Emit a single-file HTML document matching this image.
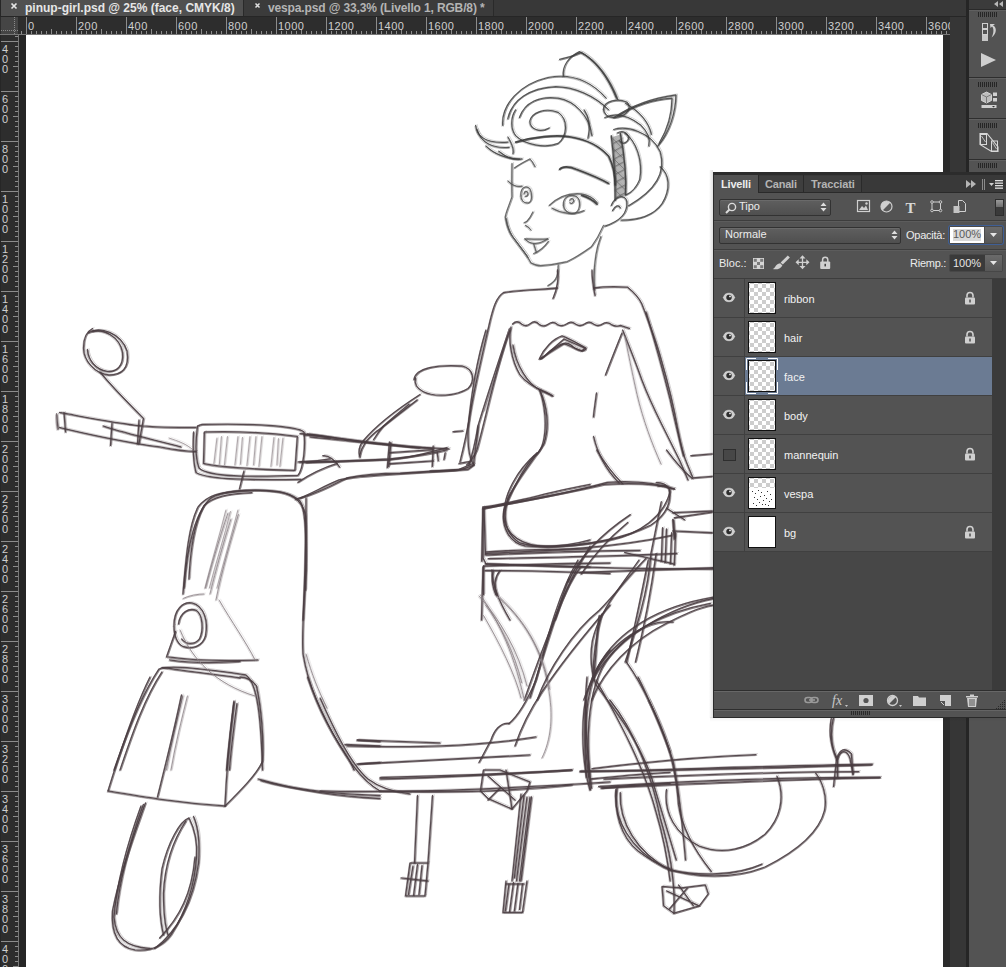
<!DOCTYPE html>
<html><head><meta charset="utf-8">
<style>
html,body{margin:0;padding:0;width:1006px;height:967px;overflow:hidden;background:#2b2b2b;font-family:"Liberation Sans",sans-serif;}
.abs{position:absolute}
</style></head><body>
<div class="abs" style="left:0;top:0;width:969px;height:17px;background:#383838"></div>
<div class="abs" style="left:0;top:0;width:1px;height:17px;background:#262626"></div>
<div class="abs" style="left:1px;top:0;width:242px;height:16px;background:#505050"></div>
<div class="abs" style="left:243px;top:0;width:1px;height:16px;background:#2a2a2a"></div>
<div class="abs" style="left:244px;top:0;width:249px;height:16px;background:#3b3b3b"></div>
<div class="abs" style="left:493px;top:0;width:1px;height:16px;background:#2a2a2a"></div>
<div class="abs" style="left:0;top:16px;width:969px;height:1px;background:#262626"></div>
<svg class="abs" style="left:10px;top:2px" width="9" height="9"><path d="M1.5 1.5 L6.5 6.5 M6.5 1.5 L1.5 6.5" stroke="#e6e6e6" stroke-width="1.7"/></svg>
<div class="abs" style="left:25px;top:1px;font-size:12px;line-height:15px;color:#e6e6e6;font-weight:bold">pinup-girl.psd @ 25% (face, CMYK/8)</div>
<svg class="abs" style="left:254px;top:2px" width="9" height="9"><path d="M1.5 1.5 L5.5 5.5 M5.5 1.5 L1.5 5.5" stroke="#e0e0e0" stroke-width="1.5"/></svg>
<div class="abs" style="left:268px;top:1px;font-size:12px;line-height:15px;color:#b4b4b4;font-weight:bold;letter-spacing:-0.14px">vespa.psd @ 33,3% (Livello 1, RGB/8) *</div>
<svg width="950" height="18" style="position:absolute;left:0;top:17px"><rect x="0" y="0" width="950" height="18" fill="#2d2d2d"/><rect x="1" y="0" width="17" height="17" fill="#454545"/><line x1="14.5" y1="0" x2="14.5" y2="17" stroke="#8a8a8a" stroke-width="1" stroke-dasharray="1,1"/><line x1="1" y1="13.5" x2="18" y2="13.5" stroke="#8a8a8a" stroke-width="1" stroke-dasharray="1,1"/><path d="M21.5 14V17M26.5 0V17M31.5 14V17M36.5 14V17M41.5 14V17M46.5 14V17M51.5 12V17M56.5 14V17M61.5 14V17M66.5 14V17M71.5 14V17M76.5 0V17M81.5 14V17M86.5 14V17M91.5 14V17M96.5 14V17M101.5 12V17M106.5 14V17M111.5 14V17M116.5 14V17M121.5 14V17M126.5 0V17M131.5 14V17M136.5 14V17M141.5 14V17M146.5 14V17M151.5 12V17M156.5 14V17M161.5 14V17M166.5 14V17M171.5 14V17M176.5 0V17M181.5 14V17M186.5 14V17M191.5 14V17M196.5 14V17M201.5 12V17M206.5 14V17M211.5 14V17M216.5 14V17M221.5 14V17M226.5 0V17M231.5 14V17M236.5 14V17M241.5 14V17M246.5 14V17M251.5 12V17M256.5 14V17M261.5 14V17M266.5 14V17M271.5 14V17M276.5 0V17M281.5 14V17M286.5 14V17M291.5 14V17M296.5 14V17M301.5 12V17M306.5 14V17M311.5 14V17M316.5 14V17M321.5 14V17M326.5 0V17M331.5 14V17M336.5 14V17M341.5 14V17M346.5 14V17M351.5 12V17M356.5 14V17M361.5 14V17M366.5 14V17M371.5 14V17M376.5 0V17M381.5 14V17M386.5 14V17M391.5 14V17M396.5 14V17M401.5 12V17M406.5 14V17M411.5 14V17M416.5 14V17M421.5 14V17M426.5 0V17M431.5 14V17M436.5 14V17M441.5 14V17M446.5 14V17M451.5 12V17M456.5 14V17M461.5 14V17M466.5 14V17M471.5 14V17M476.5 0V17M481.5 14V17M486.5 14V17M491.5 14V17M496.5 14V17M501.5 12V17M506.5 14V17M511.5 14V17M516.5 14V17M521.5 14V17M526.5 0V17M531.5 14V17M536.5 14V17M541.5 14V17M546.5 14V17M551.5 12V17M556.5 14V17M561.5 14V17M566.5 14V17M571.5 14V17M576.5 0V17M581.5 14V17M586.5 14V17M591.5 14V17M596.5 14V17M601.5 12V17M606.5 14V17M611.5 14V17M616.5 14V17M621.5 14V17M626.5 0V17M631.5 14V17M636.5 14V17M641.5 14V17M646.5 14V17M651.5 12V17M656.5 14V17M661.5 14V17M666.5 14V17M671.5 14V17M676.5 0V17M681.5 14V17M686.5 14V17M691.5 14V17M696.5 14V17M701.5 12V17M706.5 14V17M711.5 14V17M716.5 14V17M721.5 14V17M726.5 0V17M731.5 14V17M736.5 14V17M741.5 14V17M746.5 14V17M751.5 12V17M756.5 14V17M761.5 14V17M766.5 14V17M771.5 14V17M776.5 0V17M781.5 14V17M786.5 14V17M791.5 14V17M796.5 14V17M801.5 12V17M806.5 14V17M811.5 14V17M816.5 14V17M821.5 14V17M826.5 0V17M831.5 14V17M836.5 14V17M841.5 14V17M846.5 14V17M851.5 12V17M856.5 14V17M861.5 14V17M866.5 14V17M871.5 14V17M876.5 0V17M881.5 14V17M886.5 14V17M891.5 14V17M896.5 14V17M901.5 12V17M906.5 14V17M911.5 14V17M916.5 14V17M921.5 14V17M926.5 0V17M931.5 14V17M936.5 14V17M941.5 14V17M946.5 14V17" stroke="#8c8c8c" stroke-width="1" fill="none"/><text x="28" y="13" font-size="11" letter-spacing="0.45" fill="#cfcfcf" font-family="Liberation Sans, sans-serif">0</text><text x="78" y="13" font-size="11" letter-spacing="0.45" fill="#cfcfcf" font-family="Liberation Sans, sans-serif">200</text><text x="128" y="13" font-size="11" letter-spacing="0.45" fill="#cfcfcf" font-family="Liberation Sans, sans-serif">400</text><text x="178" y="13" font-size="11" letter-spacing="0.45" fill="#cfcfcf" font-family="Liberation Sans, sans-serif">600</text><text x="228" y="13" font-size="11" letter-spacing="0.45" fill="#cfcfcf" font-family="Liberation Sans, sans-serif">800</text><text x="278" y="13" font-size="11" letter-spacing="0.45" fill="#cfcfcf" font-family="Liberation Sans, sans-serif">1000</text><text x="328" y="13" font-size="11" letter-spacing="0.45" fill="#cfcfcf" font-family="Liberation Sans, sans-serif">1200</text><text x="378" y="13" font-size="11" letter-spacing="0.45" fill="#cfcfcf" font-family="Liberation Sans, sans-serif">1400</text><text x="428" y="13" font-size="11" letter-spacing="0.45" fill="#cfcfcf" font-family="Liberation Sans, sans-serif">1600</text><text x="478" y="13" font-size="11" letter-spacing="0.45" fill="#cfcfcf" font-family="Liberation Sans, sans-serif">1800</text><text x="528" y="13" font-size="11" letter-spacing="0.45" fill="#cfcfcf" font-family="Liberation Sans, sans-serif">2000</text><text x="578" y="13" font-size="11" letter-spacing="0.45" fill="#cfcfcf" font-family="Liberation Sans, sans-serif">2200</text><text x="628" y="13" font-size="11" letter-spacing="0.45" fill="#cfcfcf" font-family="Liberation Sans, sans-serif">2400</text><text x="678" y="13" font-size="11" letter-spacing="0.45" fill="#cfcfcf" font-family="Liberation Sans, sans-serif">2600</text><text x="728" y="13" font-size="11" letter-spacing="0.45" fill="#cfcfcf" font-family="Liberation Sans, sans-serif">2800</text><text x="778" y="13" font-size="11" letter-spacing="0.45" fill="#cfcfcf" font-family="Liberation Sans, sans-serif">3000</text><text x="828" y="13" font-size="11" letter-spacing="0.45" fill="#cfcfcf" font-family="Liberation Sans, sans-serif">3200</text><text x="878" y="13" font-size="11" letter-spacing="0.45" fill="#cfcfcf" font-family="Liberation Sans, sans-serif">3400</text><text x="928" y="13" font-size="11" letter-spacing="0.45" fill="#cfcfcf" font-family="Liberation Sans, sans-serif">3600</text><rect x="0" y="17" width="950" height="1" fill="#777"/></svg>
<svg width="26" height="932" style="position:absolute;left:0;top:35px"><rect x="0" y="0" width="26" height="932" fill="#262626"/><rect x="1" y="0" width="17" height="932" fill="#2d2d2d"/><rect x="18" y="0" width="1" height="932" fill="#777"/><path d="M15 1.5H18M1 6.5H18M15 11.5H18M15 16.5H18M15 21.5H18M15 26.5H18M13 31.5H18M15 36.5H18M15 41.5H18M15 46.5H18M15 51.5H18M1 56.5H18M15 61.5H18M15 66.5H18M15 71.5H18M15 76.5H18M13 81.5H18M15 86.5H18M15 91.5H18M15 96.5H18M15 101.5H18M1 106.5H18M15 111.5H18M15 116.5H18M15 121.5H18M15 126.5H18M13 131.5H18M15 136.5H18M15 141.5H18M15 146.5H18M15 151.5H18M1 156.5H18M15 161.5H18M15 166.5H18M15 171.5H18M15 176.5H18M13 181.5H18M15 186.5H18M15 191.5H18M15 196.5H18M15 201.5H18M1 206.5H18M15 211.5H18M15 216.5H18M15 221.5H18M15 226.5H18M13 231.5H18M15 236.5H18M15 241.5H18M15 246.5H18M15 251.5H18M1 256.5H18M15 261.5H18M15 266.5H18M15 271.5H18M15 276.5H18M13 281.5H18M15 286.5H18M15 291.5H18M15 296.5H18M15 301.5H18M1 306.5H18M15 311.5H18M15 316.5H18M15 321.5H18M15 326.5H18M13 331.5H18M15 336.5H18M15 341.5H18M15 346.5H18M15 351.5H18M1 356.5H18M15 361.5H18M15 366.5H18M15 371.5H18M15 376.5H18M13 381.5H18M15 386.5H18M15 391.5H18M15 396.5H18M15 401.5H18M1 406.5H18M15 411.5H18M15 416.5H18M15 421.5H18M15 426.5H18M13 431.5H18M15 436.5H18M15 441.5H18M15 446.5H18M15 451.5H18M1 456.5H18M15 461.5H18M15 466.5H18M15 471.5H18M15 476.5H18M13 481.5H18M15 486.5H18M15 491.5H18M15 496.5H18M15 501.5H18M1 506.5H18M15 511.5H18M15 516.5H18M15 521.5H18M15 526.5H18M13 531.5H18M15 536.5H18M15 541.5H18M15 546.5H18M15 551.5H18M1 556.5H18M15 561.5H18M15 566.5H18M15 571.5H18M15 576.5H18M13 581.5H18M15 586.5H18M15 591.5H18M15 596.5H18M15 601.5H18M1 606.5H18M15 611.5H18M15 616.5H18M15 621.5H18M15 626.5H18M13 631.5H18M15 636.5H18M15 641.5H18M15 646.5H18M15 651.5H18M1 656.5H18M15 661.5H18M15 666.5H18M15 671.5H18M15 676.5H18M13 681.5H18M15 686.5H18M15 691.5H18M15 696.5H18M15 701.5H18M1 706.5H18M15 711.5H18M15 716.5H18M15 721.5H18M15 726.5H18M13 731.5H18M15 736.5H18M15 741.5H18M15 746.5H18M15 751.5H18M1 756.5H18M15 761.5H18M15 766.5H18M15 771.5H18M15 776.5H18M13 781.5H18M15 786.5H18M15 791.5H18M15 796.5H18M15 801.5H18M1 806.5H18M15 811.5H18M15 816.5H18M15 821.5H18M15 826.5H18M13 831.5H18M15 836.5H18M15 841.5H18M15 846.5H18M15 851.5H18M1 856.5H18M15 861.5H18M15 866.5H18M15 871.5H18M15 876.5H18M13 881.5H18M15 886.5H18M15 891.5H18M15 896.5H18M15 901.5H18M1 906.5H18M15 911.5H18M15 916.5H18M15 921.5H18M15 926.5H18M13 931.5H18" stroke="#8c8c8c" stroke-width="1" fill="none"/><text x="2" y="18" font-size="11" fill="#cfcfcf" font-family="Liberation Sans, sans-serif">4</text><text x="2" y="28" font-size="11" fill="#cfcfcf" font-family="Liberation Sans, sans-serif">0</text><text x="2" y="38" font-size="11" fill="#cfcfcf" font-family="Liberation Sans, sans-serif">0</text><text x="2" y="68" font-size="11" fill="#cfcfcf" font-family="Liberation Sans, sans-serif">6</text><text x="2" y="78" font-size="11" fill="#cfcfcf" font-family="Liberation Sans, sans-serif">0</text><text x="2" y="88" font-size="11" fill="#cfcfcf" font-family="Liberation Sans, sans-serif">0</text><text x="2" y="118" font-size="11" fill="#cfcfcf" font-family="Liberation Sans, sans-serif">8</text><text x="2" y="128" font-size="11" fill="#cfcfcf" font-family="Liberation Sans, sans-serif">0</text><text x="2" y="138" font-size="11" fill="#cfcfcf" font-family="Liberation Sans, sans-serif">0</text><text x="2" y="168" font-size="11" fill="#cfcfcf" font-family="Liberation Sans, sans-serif">1</text><text x="2" y="178" font-size="11" fill="#cfcfcf" font-family="Liberation Sans, sans-serif">0</text><text x="2" y="188" font-size="11" fill="#cfcfcf" font-family="Liberation Sans, sans-serif">0</text><text x="2" y="198" font-size="11" fill="#cfcfcf" font-family="Liberation Sans, sans-serif">0</text><text x="2" y="218" font-size="11" fill="#cfcfcf" font-family="Liberation Sans, sans-serif">1</text><text x="2" y="228" font-size="11" fill="#cfcfcf" font-family="Liberation Sans, sans-serif">2</text><text x="2" y="238" font-size="11" fill="#cfcfcf" font-family="Liberation Sans, sans-serif">0</text><text x="2" y="248" font-size="11" fill="#cfcfcf" font-family="Liberation Sans, sans-serif">0</text><text x="2" y="268" font-size="11" fill="#cfcfcf" font-family="Liberation Sans, sans-serif">1</text><text x="2" y="278" font-size="11" fill="#cfcfcf" font-family="Liberation Sans, sans-serif">4</text><text x="2" y="288" font-size="11" fill="#cfcfcf" font-family="Liberation Sans, sans-serif">0</text><text x="2" y="298" font-size="11" fill="#cfcfcf" font-family="Liberation Sans, sans-serif">0</text><text x="2" y="318" font-size="11" fill="#cfcfcf" font-family="Liberation Sans, sans-serif">1</text><text x="2" y="328" font-size="11" fill="#cfcfcf" font-family="Liberation Sans, sans-serif">6</text><text x="2" y="338" font-size="11" fill="#cfcfcf" font-family="Liberation Sans, sans-serif">0</text><text x="2" y="348" font-size="11" fill="#cfcfcf" font-family="Liberation Sans, sans-serif">0</text><text x="2" y="368" font-size="11" fill="#cfcfcf" font-family="Liberation Sans, sans-serif">1</text><text x="2" y="378" font-size="11" fill="#cfcfcf" font-family="Liberation Sans, sans-serif">8</text><text x="2" y="388" font-size="11" fill="#cfcfcf" font-family="Liberation Sans, sans-serif">0</text><text x="2" y="398" font-size="11" fill="#cfcfcf" font-family="Liberation Sans, sans-serif">0</text><text x="2" y="418" font-size="11" fill="#cfcfcf" font-family="Liberation Sans, sans-serif">2</text><text x="2" y="428" font-size="11" fill="#cfcfcf" font-family="Liberation Sans, sans-serif">0</text><text x="2" y="438" font-size="11" fill="#cfcfcf" font-family="Liberation Sans, sans-serif">0</text><text x="2" y="448" font-size="11" fill="#cfcfcf" font-family="Liberation Sans, sans-serif">0</text><text x="2" y="468" font-size="11" fill="#cfcfcf" font-family="Liberation Sans, sans-serif">2</text><text x="2" y="478" font-size="11" fill="#cfcfcf" font-family="Liberation Sans, sans-serif">2</text><text x="2" y="488" font-size="11" fill="#cfcfcf" font-family="Liberation Sans, sans-serif">0</text><text x="2" y="498" font-size="11" fill="#cfcfcf" font-family="Liberation Sans, sans-serif">0</text><text x="2" y="518" font-size="11" fill="#cfcfcf" font-family="Liberation Sans, sans-serif">2</text><text x="2" y="528" font-size="11" fill="#cfcfcf" font-family="Liberation Sans, sans-serif">4</text><text x="2" y="538" font-size="11" fill="#cfcfcf" font-family="Liberation Sans, sans-serif">0</text><text x="2" y="548" font-size="11" fill="#cfcfcf" font-family="Liberation Sans, sans-serif">0</text><text x="2" y="568" font-size="11" fill="#cfcfcf" font-family="Liberation Sans, sans-serif">2</text><text x="2" y="578" font-size="11" fill="#cfcfcf" font-family="Liberation Sans, sans-serif">6</text><text x="2" y="588" font-size="11" fill="#cfcfcf" font-family="Liberation Sans, sans-serif">0</text><text x="2" y="598" font-size="11" fill="#cfcfcf" font-family="Liberation Sans, sans-serif">0</text><text x="2" y="618" font-size="11" fill="#cfcfcf" font-family="Liberation Sans, sans-serif">2</text><text x="2" y="628" font-size="11" fill="#cfcfcf" font-family="Liberation Sans, sans-serif">8</text><text x="2" y="638" font-size="11" fill="#cfcfcf" font-family="Liberation Sans, sans-serif">0</text><text x="2" y="648" font-size="11" fill="#cfcfcf" font-family="Liberation Sans, sans-serif">0</text><text x="2" y="668" font-size="11" fill="#cfcfcf" font-family="Liberation Sans, sans-serif">3</text><text x="2" y="678" font-size="11" fill="#cfcfcf" font-family="Liberation Sans, sans-serif">0</text><text x="2" y="688" font-size="11" fill="#cfcfcf" font-family="Liberation Sans, sans-serif">0</text><text x="2" y="698" font-size="11" fill="#cfcfcf" font-family="Liberation Sans, sans-serif">0</text><text x="2" y="718" font-size="11" fill="#cfcfcf" font-family="Liberation Sans, sans-serif">3</text><text x="2" y="728" font-size="11" fill="#cfcfcf" font-family="Liberation Sans, sans-serif">2</text><text x="2" y="738" font-size="11" fill="#cfcfcf" font-family="Liberation Sans, sans-serif">0</text><text x="2" y="748" font-size="11" fill="#cfcfcf" font-family="Liberation Sans, sans-serif">0</text><text x="2" y="768" font-size="11" fill="#cfcfcf" font-family="Liberation Sans, sans-serif">3</text><text x="2" y="778" font-size="11" fill="#cfcfcf" font-family="Liberation Sans, sans-serif">4</text><text x="2" y="788" font-size="11" fill="#cfcfcf" font-family="Liberation Sans, sans-serif">0</text><text x="2" y="798" font-size="11" fill="#cfcfcf" font-family="Liberation Sans, sans-serif">0</text><text x="2" y="818" font-size="11" fill="#cfcfcf" font-family="Liberation Sans, sans-serif">3</text><text x="2" y="828" font-size="11" fill="#cfcfcf" font-family="Liberation Sans, sans-serif">6</text><text x="2" y="838" font-size="11" fill="#cfcfcf" font-family="Liberation Sans, sans-serif">0</text><text x="2" y="848" font-size="11" fill="#cfcfcf" font-family="Liberation Sans, sans-serif">0</text><text x="2" y="868" font-size="11" fill="#cfcfcf" font-family="Liberation Sans, sans-serif">3</text><text x="2" y="878" font-size="11" fill="#cfcfcf" font-family="Liberation Sans, sans-serif">8</text><text x="2" y="888" font-size="11" fill="#cfcfcf" font-family="Liberation Sans, sans-serif">0</text><text x="2" y="898" font-size="11" fill="#cfcfcf" font-family="Liberation Sans, sans-serif">0</text><text x="2" y="918" font-size="11" fill="#cfcfcf" font-family="Liberation Sans, sans-serif">4</text><text x="2" y="928" font-size="11" fill="#cfcfcf" font-family="Liberation Sans, sans-serif">0</text><text x="2" y="938" font-size="11" fill="#cfcfcf" font-family="Liberation Sans, sans-serif">0</text><text x="2" y="948" font-size="11" fill="#cfcfcf" font-family="Liberation Sans, sans-serif">0</text></svg>
<div class="abs" style="left:26px;top:35px;width:917px;height:932px;background:#fff"></div>
<div class="abs" style="left:943px;top:35px;width:7px;height:932px;background:#2b2b2b"></div>
<div class="abs" style="left:950px;top:17px;width:16px;height:950px;background:#363636"></div>
<div class="abs" style="left:966px;top:0;width:3px;height:967px;background:#252525"></div>
<div class="abs" style="left:969px;top:0px;width:37px;height:967px;background:#535353;"></div>
<div class="abs" style="left:969px;top:0px;width:37px;height:9px;background:#3b3b3b;"></div>
<div class="abs" style="left:969px;top:9px;width:37px;height:1px;background:#2a2a2a;"></div>
<div class="abs" style="left:969px;top:10px;width:37px;height:1px;background:#606060;"></div>
<svg class="abs" style="left:993px;top:0px" width="12" height="8"><path d="M5 1 L1 4 L5 7 Z M10 1 L6 4 L10 7 Z" fill="#b8b8b8"/></svg>
<svg class="abs" style="left:978px;top:12px" width="20" height="5"><rect x="0" y="0" width="1" height="5" fill="#262626"/><rect x="2" y="0" width="1" height="5" fill="#262626"/><rect x="4" y="0" width="1" height="5" fill="#262626"/><rect x="6" y="0" width="1" height="5" fill="#262626"/><rect x="8" y="0" width="1" height="5" fill="#262626"/><rect x="10" y="0" width="1" height="5" fill="#262626"/><rect x="12" y="0" width="1" height="5" fill="#262626"/><rect x="14" y="0" width="1" height="5" fill="#262626"/><rect x="16" y="0" width="1" height="5" fill="#262626"/><rect x="18" y="0" width="1" height="5" fill="#262626"/></svg>
<div class="abs" style="left:969px;top:77px;width:37px;height:1px;background:#2e2e2e;"></div>
<div class="abs" style="left:969px;top:78px;width:37px;height:1px;background:#606060;"></div>
<div class="abs" style="left:969px;top:118px;width:37px;height:1px;background:#2e2e2e;"></div>
<div class="abs" style="left:969px;top:119px;width:37px;height:1px;background:#606060;"></div>
<div class="abs" style="left:969px;top:159px;width:37px;height:1px;background:#2e2e2e;"></div>
<div class="abs" style="left:969px;top:160px;width:37px;height:1px;background:#606060;"></div>
<svg class="abs" style="left:978px;top:82px" width="20" height="5"><rect x="0" y="0" width="1" height="5" fill="#262626"/><rect x="2" y="0" width="1" height="5" fill="#262626"/><rect x="4" y="0" width="1" height="5" fill="#262626"/><rect x="6" y="0" width="1" height="5" fill="#262626"/><rect x="8" y="0" width="1" height="5" fill="#262626"/><rect x="10" y="0" width="1" height="5" fill="#262626"/><rect x="12" y="0" width="1" height="5" fill="#262626"/><rect x="14" y="0" width="1" height="5" fill="#262626"/><rect x="16" y="0" width="1" height="5" fill="#262626"/><rect x="18" y="0" width="1" height="5" fill="#262626"/></svg>
<svg class="abs" style="left:978px;top:123px" width="20" height="5"><rect x="0" y="0" width="1" height="5" fill="#262626"/><rect x="2" y="0" width="1" height="5" fill="#262626"/><rect x="4" y="0" width="1" height="5" fill="#262626"/><rect x="6" y="0" width="1" height="5" fill="#262626"/><rect x="8" y="0" width="1" height="5" fill="#262626"/><rect x="10" y="0" width="1" height="5" fill="#262626"/><rect x="12" y="0" width="1" height="5" fill="#262626"/><rect x="14" y="0" width="1" height="5" fill="#262626"/><rect x="16" y="0" width="1" height="5" fill="#262626"/><rect x="18" y="0" width="1" height="5" fill="#262626"/></svg>
<svg class="abs" style="left:978px;top:163px" width="20" height="5"><rect x="0" y="0" width="1" height="5" fill="#262626"/><rect x="2" y="0" width="1" height="5" fill="#262626"/><rect x="4" y="0" width="1" height="5" fill="#262626"/><rect x="6" y="0" width="1" height="5" fill="#262626"/><rect x="8" y="0" width="1" height="5" fill="#262626"/><rect x="10" y="0" width="1" height="5" fill="#262626"/><rect x="12" y="0" width="1" height="5" fill="#262626"/><rect x="14" y="0" width="1" height="5" fill="#262626"/><rect x="16" y="0" width="1" height="5" fill="#262626"/><rect x="18" y="0" width="1" height="5" fill="#262626"/></svg>
<svg class="abs" style="left:980px;top:22px" width="20" height="20"><rect x="2.5" y="1.5" width="5" height="5" fill="none" stroke="#d0d0d0" stroke-width="1"/><rect x="2.5" y="7.5" width="5" height="5" fill="none" stroke="#d0d0d0" stroke-width="1"/><rect x="2" y="13" width="6" height="6" fill="#c8c8c8"/><path d="M10 2 L15 2 L13 3.5 C17 5 17 12 11.5 15.5 C14 11.5 14 6 12 4.5 L10.5 6 Z" fill="#d0d0d0"/></svg>
<svg class="abs" style="left:980px;top:52px" width="18" height="17"><path d="M1 1 L16 8 L1 15 Z" fill="#cfcfcf"/></svg>
<svg class="abs" style="left:980px;top:91px" width="20" height="20"><path d="M6.5 1 L11.5 3.5 L11.5 9.5 L6.5 12 L1.5 9.5 L1.5 3.5 Z" fill="#bdbdbd" stroke="#e0e0e0" stroke-width="0.8"/><path d="M1.5 3.5 L6.5 6 L11.5 3.5 M6.5 6 L6.5 12" fill="none" stroke="#6a6a6a" stroke-width="0.8"/><rect x="13" y="1.5" width="4" height="3.5" fill="#d0d0d0"/><rect x="13" y="7" width="4" height="3.5" fill="#d0d0d0"/><rect x="1.5" y="14" width="15" height="3" fill="#d0d0d0"/><path d="M12 15 L15 15 L13.5 16.6 Z" fill="#333"/></svg>
<svg class="abs" style="left:979px;top:132px" width="22" height="22"><path d="M1 1.5 L8 1.5 L19 15 L19 19.5 L12.5 19.5 L1 12.5 Z" fill="none" stroke="#d8d8d8" stroke-width="1.1"/><rect x="1.5" y="2.5" width="6" height="10" fill="none" stroke="#d8d8d8" stroke-width="1"/><rect x="12.5" y="9" width="6" height="10" fill="none" stroke="#d8d8d8" stroke-width="1"/><path d="M2.5 4 L6.5 10" stroke="#d8d8d8" stroke-width="0.8"/><path d="M13.5 10.5 L17.5 17" stroke="#d8d8d8" stroke-width="0.8"/></svg>
<svg class="abs" style="left:26px;top:35px" width="917" height="932" viewBox="26 35 917 932"><path transform="translate(460,40) scale(0.25853)" d="M590,375 L622,365 C635,440 645,520 640,600 L602,618 C600,550 595,450 590,375 Z" fill="#6a6a6a" fill-opacity="0.5"/>
<g transform="translate(460,40) scale(0.25853)" fill="none" stroke="#3f3f3f" stroke-width="1.20" stroke-opacity="0.85" stroke-linecap="round" stroke-linejoin="round">
<path d="M400,140 C395,100 420,65 462,45 C520,75 570,140 605,225" vector-effect="non-scaling-stroke"/>
<path d="M385,75 C420,68 455,55 470,48 C530,80 580,150 610,230" vector-effect="non-scaling-stroke"/>
<path d="M555,265 C560,235 610,225 645,240 C665,260 650,295 600,300 C570,300 555,285 555,265" vector-effect="non-scaling-stroke"/>
<path d="M595,300 C660,255 740,225 835,212 C835,280 810,360 765,410" vector-effect="non-scaling-stroke"/>
<path d="M610,295 C680,250 750,230 820,225 C820,290 800,350 770,400" vector-effect="non-scaling-stroke"/>
<path d="M640,245 C700,280 730,320 740,365" vector-effect="non-scaling-stroke"/>
<path d="M165,330 C160,250 230,170 340,145 C420,130 500,150 565,225" vector-effect="non-scaling-stroke"/>
<path d="M185,305 C200,230 270,185 370,180 C440,180 520,215 575,270" vector-effect="non-scaling-stroke"/>
<path d="M230,300 C250,240 310,215 380,225 C440,235 500,290 510,370" vector-effect="non-scaling-stroke"/>
<path d="M345,340 C310,360 270,345 270,315 C275,280 330,260 380,280 C420,310 415,370 380,400 C330,420 250,405 215,370 C195,345 195,300 215,270" vector-effect="non-scaling-stroke"/>
<path d="M495,380 C505,340 500,300 480,270" vector-effect="non-scaling-stroke"/>
<path d="M60,330 C65,380 110,400 185,395" vector-effect="non-scaling-stroke"/>
<path d="M65,345 C80,400 130,420 190,415" vector-effect="non-scaling-stroke"/>
<path d="M100,410 C130,440 180,460 230,460" vector-effect="non-scaling-stroke"/>
<path d="M150,430 C180,455 210,465 240,460" vector-effect="non-scaling-stroke"/>
<path d="M185,375 C200,400 210,420 205,440" vector-effect="non-scaling-stroke"/>
<path d="M594,346 C644,331 738,353 774,432 C796,504 767,576 652,641" vector-effect="non-scaling-stroke"/>
<path d="M637,360 C680,389 709,468 695,540 C680,576 659,591 644,598" vector-effect="non-scaling-stroke"/>
<path d="M774,490 C810,519 817,576 781,634 C745,684 680,697 623,697" vector-effect="non-scaling-stroke"/>
<path d="M608,360 C630,346 652,360 652,382 C644,403 623,403 616,389" vector-effect="non-scaling-stroke"/>
<path d="M560,300 C600,280 650,290 700,330 C730,360 735,390 730,410" vector-effect="non-scaling-stroke"/>
<path d="M585,640 C600,600 640,595 645,625 C650,670 620,700 560,720" vector-effect="non-scaling-stroke"/>
<path d="M590,660 C600,640 615,635 620,650" vector-effect="non-scaling-stroke"/>
</g>
<g transform="translate(460.8,40.7) scale(0.25853)" fill="none" stroke="#3f3f3f" stroke-width="0.96" stroke-opacity="0.47" stroke-linecap="round" stroke-linejoin="round">
<path d="M400,140 C395,100 420,65 462,45 C520,75 570,140 605,225" vector-effect="non-scaling-stroke"/>
<path d="M385,75 C420,68 455,55 470,48 C530,80 580,150 610,230" vector-effect="non-scaling-stroke"/>
<path d="M555,265 C560,235 610,225 645,240 C665,260 650,295 600,300 C570,300 555,285 555,265" vector-effect="non-scaling-stroke"/>
<path d="M595,300 C660,255 740,225 835,212 C835,280 810,360 765,410" vector-effect="non-scaling-stroke"/>
<path d="M610,295 C680,250 750,230 820,225 C820,290 800,350 770,400" vector-effect="non-scaling-stroke"/>
<path d="M640,245 C700,280 730,320 740,365" vector-effect="non-scaling-stroke"/>
<path d="M165,330 C160,250 230,170 340,145 C420,130 500,150 565,225" vector-effect="non-scaling-stroke"/>
<path d="M185,305 C200,230 270,185 370,180 C440,180 520,215 575,270" vector-effect="non-scaling-stroke"/>
<path d="M230,300 C250,240 310,215 380,225 C440,235 500,290 510,370" vector-effect="non-scaling-stroke"/>
<path d="M345,340 C310,360 270,345 270,315 C275,280 330,260 380,280 C420,310 415,370 380,400 C330,420 250,405 215,370 C195,345 195,300 215,270" vector-effect="non-scaling-stroke"/>
<path d="M495,380 C505,340 500,300 480,270" vector-effect="non-scaling-stroke"/>
<path d="M60,330 C65,380 110,400 185,395" vector-effect="non-scaling-stroke"/>
<path d="M65,345 C80,400 130,420 190,415" vector-effect="non-scaling-stroke"/>
<path d="M100,410 C130,440 180,460 230,460" vector-effect="non-scaling-stroke"/>
<path d="M150,430 C180,455 210,465 240,460" vector-effect="non-scaling-stroke"/>
<path d="M185,375 C200,400 210,420 205,440" vector-effect="non-scaling-stroke"/>
<path d="M594,346 C644,331 738,353 774,432 C796,504 767,576 652,641" vector-effect="non-scaling-stroke"/>
<path d="M637,360 C680,389 709,468 695,540 C680,576 659,591 644,598" vector-effect="non-scaling-stroke"/>
<path d="M774,490 C810,519 817,576 781,634 C745,684 680,697 623,697" vector-effect="non-scaling-stroke"/>
<path d="M608,360 C630,346 652,360 652,382 C644,403 623,403 616,389" vector-effect="non-scaling-stroke"/>
<path d="M560,300 C600,280 650,290 700,330 C730,360 735,390 730,410" vector-effect="non-scaling-stroke"/>
<path d="M585,640 C600,600 640,595 645,625 C650,670 620,700 560,720" vector-effect="non-scaling-stroke"/>
<path d="M590,660 C600,640 615,635 620,650" vector-effect="non-scaling-stroke"/>
</g>
<g transform="translate(459.3,41.1) scale(0.25853)" fill="none" stroke="#3f3f3f" stroke-width="0.84" stroke-opacity="0.34" stroke-linecap="round" stroke-linejoin="round">
<path d="M400,140 C395,100 420,65 462,45 C520,75 570,140 605,225" vector-effect="non-scaling-stroke"/>
<path d="M385,75 C420,68 455,55 470,48 C530,80 580,150 610,230" vector-effect="non-scaling-stroke"/>
<path d="M555,265 C560,235 610,225 645,240 C665,260 650,295 600,300 C570,300 555,285 555,265" vector-effect="non-scaling-stroke"/>
<path d="M595,300 C660,255 740,225 835,212 C835,280 810,360 765,410" vector-effect="non-scaling-stroke"/>
<path d="M610,295 C680,250 750,230 820,225 C820,290 800,350 770,400" vector-effect="non-scaling-stroke"/>
<path d="M640,245 C700,280 730,320 740,365" vector-effect="non-scaling-stroke"/>
<path d="M165,330 C160,250 230,170 340,145 C420,130 500,150 565,225" vector-effect="non-scaling-stroke"/>
<path d="M185,305 C200,230 270,185 370,180 C440,180 520,215 575,270" vector-effect="non-scaling-stroke"/>
<path d="M230,300 C250,240 310,215 380,225 C440,235 500,290 510,370" vector-effect="non-scaling-stroke"/>
<path d="M345,340 C310,360 270,345 270,315 C275,280 330,260 380,280 C420,310 415,370 380,400 C330,420 250,405 215,370 C195,345 195,300 215,270" vector-effect="non-scaling-stroke"/>
<path d="M495,380 C505,340 500,300 480,270" vector-effect="non-scaling-stroke"/>
<path d="M60,330 C65,380 110,400 185,395" vector-effect="non-scaling-stroke"/>
<path d="M65,345 C80,400 130,420 190,415" vector-effect="non-scaling-stroke"/>
<path d="M100,410 C130,440 180,460 230,460" vector-effect="non-scaling-stroke"/>
<path d="M150,430 C180,455 210,465 240,460" vector-effect="non-scaling-stroke"/>
<path d="M185,375 C200,400 210,420 205,440" vector-effect="non-scaling-stroke"/>
<path d="M594,346 C644,331 738,353 774,432 C796,504 767,576 652,641" vector-effect="non-scaling-stroke"/>
<path d="M637,360 C680,389 709,468 695,540 C680,576 659,591 644,598" vector-effect="non-scaling-stroke"/>
<path d="M774,490 C810,519 817,576 781,634 C745,684 680,697 623,697" vector-effect="non-scaling-stroke"/>
<path d="M608,360 C630,346 652,360 652,382 C644,403 623,403 616,389" vector-effect="non-scaling-stroke"/>
<path d="M560,300 C600,280 650,290 700,330 C730,360 735,390 730,410" vector-effect="non-scaling-stroke"/>
<path d="M585,640 C600,600 640,595 645,625 C650,670 620,700 560,720" vector-effect="non-scaling-stroke"/>
<path d="M590,660 C600,640 615,635 620,650" vector-effect="non-scaling-stroke"/>
</g>
<g transform="translate(461.6,39.1) scale(0.25853)" fill="none" stroke="#3f3f3f" stroke-width="0.84" stroke-opacity="0.26" stroke-linecap="round" stroke-linejoin="round">
<path d="M400,140 C395,100 420,65 462,45 C520,75 570,140 605,225" vector-effect="non-scaling-stroke"/>
<path d="M385,75 C420,68 455,55 470,48 C530,80 580,150 610,230" vector-effect="non-scaling-stroke"/>
<path d="M555,265 C560,235 610,225 645,240 C665,260 650,295 600,300 C570,300 555,285 555,265" vector-effect="non-scaling-stroke"/>
<path d="M595,300 C660,255 740,225 835,212 C835,280 810,360 765,410" vector-effect="non-scaling-stroke"/>
<path d="M610,295 C680,250 750,230 820,225 C820,290 800,350 770,400" vector-effect="non-scaling-stroke"/>
<path d="M640,245 C700,280 730,320 740,365" vector-effect="non-scaling-stroke"/>
<path d="M165,330 C160,250 230,170 340,145 C420,130 500,150 565,225" vector-effect="non-scaling-stroke"/>
<path d="M185,305 C200,230 270,185 370,180 C440,180 520,215 575,270" vector-effect="non-scaling-stroke"/>
<path d="M230,300 C250,240 310,215 380,225 C440,235 500,290 510,370" vector-effect="non-scaling-stroke"/>
<path d="M345,340 C310,360 270,345 270,315 C275,280 330,260 380,280 C420,310 415,370 380,400 C330,420 250,405 215,370 C195,345 195,300 215,270" vector-effect="non-scaling-stroke"/>
<path d="M495,380 C505,340 500,300 480,270" vector-effect="non-scaling-stroke"/>
<path d="M60,330 C65,380 110,400 185,395" vector-effect="non-scaling-stroke"/>
<path d="M65,345 C80,400 130,420 190,415" vector-effect="non-scaling-stroke"/>
<path d="M100,410 C130,440 180,460 230,460" vector-effect="non-scaling-stroke"/>
<path d="M150,430 C180,455 210,465 240,460" vector-effect="non-scaling-stroke"/>
<path d="M185,375 C200,400 210,420 205,440" vector-effect="non-scaling-stroke"/>
<path d="M594,346 C644,331 738,353 774,432 C796,504 767,576 652,641" vector-effect="non-scaling-stroke"/>
<path d="M637,360 C680,389 709,468 695,540 C680,576 659,591 644,598" vector-effect="non-scaling-stroke"/>
<path d="M774,490 C810,519 817,576 781,634 C745,684 680,697 623,697" vector-effect="non-scaling-stroke"/>
<path d="M608,360 C630,346 652,360 652,382 C644,403 623,403 616,389" vector-effect="non-scaling-stroke"/>
<path d="M560,300 C600,280 650,290 700,330 C730,360 735,390 730,410" vector-effect="non-scaling-stroke"/>
<path d="M585,640 C600,600 640,595 645,625 C650,670 620,700 560,720" vector-effect="non-scaling-stroke"/>
<path d="M590,660 C600,640 615,635 620,650" vector-effect="non-scaling-stroke"/>
</g>
<g transform="translate(460,40) scale(0.25853)" fill="none" stroke="#3a3a3a" stroke-width="1.60" stroke-opacity="0.90" stroke-linecap="round" stroke-linejoin="round">
<path d="M215,395 C280,375 370,365 430,375 C490,385 540,410 575,450 C590,480 600,520 600,560" vector-effect="non-scaling-stroke"/>
<path d="M385,500 C395,488 420,487 450,500 C490,515 540,535 575,555" vector-effect="non-scaling-stroke"/>
<path d="M470,600 C500,610 520,625 530,635" vector-effect="non-scaling-stroke"/>
</g>
<g transform="translate(460.8,40.7) scale(0.25853)" fill="none" stroke="#3a3a3a" stroke-width="1.28" stroke-opacity="0.50" stroke-linecap="round" stroke-linejoin="round">
<path d="M215,395 C280,375 370,365 430,375 C490,385 540,410 575,450 C590,480 600,520 600,560" vector-effect="non-scaling-stroke"/>
<path d="M385,500 C395,488 420,487 450,500 C490,515 540,535 575,555" vector-effect="non-scaling-stroke"/>
<path d="M470,600 C500,610 520,625 530,635" vector-effect="non-scaling-stroke"/>
</g>
<g transform="translate(459.3,41.1) scale(0.25853)" fill="none" stroke="#3a3a3a" stroke-width="1.12" stroke-opacity="0.36" stroke-linecap="round" stroke-linejoin="round">
<path d="M215,395 C280,375 370,365 430,375 C490,385 540,410 575,450 C590,480 600,520 600,560" vector-effect="non-scaling-stroke"/>
<path d="M385,500 C395,488 420,487 450,500 C490,515 540,535 575,555" vector-effect="non-scaling-stroke"/>
<path d="M470,600 C500,610 520,625 530,635" vector-effect="non-scaling-stroke"/>
</g>
<g transform="translate(461.6,39.1) scale(0.25853)" fill="none" stroke="#3a3a3a" stroke-width="1.12" stroke-opacity="0.27" stroke-linecap="round" stroke-linejoin="round">
<path d="M215,395 C280,375 370,365 430,375 C490,385 540,410 575,450 C590,480 600,520 600,560" vector-effect="non-scaling-stroke"/>
<path d="M385,500 C395,488 420,487 450,500 C490,515 540,535 575,555" vector-effect="non-scaling-stroke"/>
<path d="M470,600 C500,610 520,625 530,635" vector-effect="non-scaling-stroke"/>
</g>
<g transform="translate(460,40) scale(0.25853)" fill="none" stroke="#3a3a3a" stroke-width="1.30" stroke-opacity="0.90" stroke-linecap="round" stroke-linejoin="round">
<path d="M585,370 C595,450 600,550 600,620" vector-effect="non-scaling-stroke"/>
<path d="M620,360 C635,440 645,520 640,600" vector-effect="non-scaling-stroke"/>
</g>
<g transform="translate(460.8,40.7) scale(0.25853)" fill="none" stroke="#3a3a3a" stroke-width="1.04" stroke-opacity="0.50" stroke-linecap="round" stroke-linejoin="round">
<path d="M585,370 C595,450 600,550 600,620" vector-effect="non-scaling-stroke"/>
<path d="M620,360 C635,440 645,520 640,600" vector-effect="non-scaling-stroke"/>
</g>
<g transform="translate(459.3,41.1) scale(0.25853)" fill="none" stroke="#3a3a3a" stroke-width="0.91" stroke-opacity="0.36" stroke-linecap="round" stroke-linejoin="round">
<path d="M585,370 C595,450 600,550 600,620" vector-effect="non-scaling-stroke"/>
<path d="M620,360 C635,440 645,520 640,600" vector-effect="non-scaling-stroke"/>
</g>
<g transform="translate(461.6,39.1) scale(0.25853)" fill="none" stroke="#3a3a3a" stroke-width="0.91" stroke-opacity="0.27" stroke-linecap="round" stroke-linejoin="round">
<path d="M585,370 C595,450 600,550 600,620" vector-effect="non-scaling-stroke"/>
<path d="M620,360 C635,440 645,520 640,600" vector-effect="non-scaling-stroke"/>
</g>
<g transform="translate(460,40) scale(0.25853)" fill="none" stroke="#555" stroke-width="0.80" stroke-opacity="0.60" stroke-linecap="round" stroke-linejoin="round">
<path d="M592,400 L628,380 M594,430 L630,410 M596,460 L632,440 M597,490 L635,470 M598,520 L637,500 M599,550 L638,530 M600,580 L639,560 M601,610 L640,590" vector-effect="non-scaling-stroke"/>
<path d="M590,380 L630,420 M593,420 L633,460 M595,460 L636,500 M597,500 L638,540 M599,540 L640,580 M600,580 L625,605" vector-effect="non-scaling-stroke"/>
</g>
<g transform="translate(460.8,40.7) scale(0.25853)" fill="none" stroke="#555" stroke-width="0.64" stroke-opacity="0.33" stroke-linecap="round" stroke-linejoin="round">
<path d="M592,400 L628,380 M594,430 L630,410 M596,460 L632,440 M597,490 L635,470 M598,520 L637,500 M599,550 L638,530 M600,580 L639,560 M601,610 L640,590" vector-effect="non-scaling-stroke"/>
<path d="M590,380 L630,420 M593,420 L633,460 M595,460 L636,500 M597,500 L638,540 M599,540 L640,580 M600,580 L625,605" vector-effect="non-scaling-stroke"/>
</g>
<g transform="translate(459.3,41.1) scale(0.25853)" fill="none" stroke="#555" stroke-width="0.56" stroke-opacity="0.24" stroke-linecap="round" stroke-linejoin="round">
<path d="M592,400 L628,380 M594,430 L630,410 M596,460 L632,440 M597,490 L635,470 M598,520 L637,500 M599,550 L638,530 M600,580 L639,560 M601,610 L640,590" vector-effect="non-scaling-stroke"/>
<path d="M590,380 L630,420 M593,420 L633,460 M595,460 L636,500 M597,500 L638,540 M599,540 L640,580 M600,580 L625,605" vector-effect="non-scaling-stroke"/>
</g>
<g transform="translate(461.6,39.1) scale(0.25853)" fill="none" stroke="#555" stroke-width="0.56" stroke-opacity="0.18" stroke-linecap="round" stroke-linejoin="round">
<path d="M592,400 L628,380 M594,430 L630,410 M596,460 L632,440 M597,490 L635,470 M598,520 L637,500 M599,550 L638,530 M600,580 L639,560 M601,610 L640,590" vector-effect="non-scaling-stroke"/>
<path d="M590,380 L630,420 M593,420 L633,460 M595,460 L636,500 M597,500 L638,540 M599,540 L640,580 M600,580 L625,605" vector-effect="non-scaling-stroke"/>
</g>
<g transform="translate(460,40) scale(0.25853)" fill="none" stroke="#555555" stroke-width="1.20" stroke-opacity="0.85" stroke-linecap="round" stroke-linejoin="round">
<path d="M201,477 C200,540 200,580 201,607 C190,640 178,665 175,685 C180,715 190,740 201,758 C225,790 245,815 259,836 L274,862 C290,870 300,873 311,873 C350,870 380,865 415,857 C450,840 480,820 508,800 C530,770 545,740 555,717" vector-effect="non-scaling-stroke"/>
<path d="M178,690 C182,720 192,745 203,760 C228,795 248,820 262,840" vector-effect="non-scaling-stroke"/>
<path d="M380,870 C380,905 378,930 340,950" vector-effect="non-scaling-stroke"/>
<path d="M545,760 C525,810 515,880 520,967" vector-effect="non-scaling-stroke"/>
<path d="M210,495 C230,480 250,470 270,460 C280,470 285,480 290,490" vector-effect="non-scaling-stroke"/>
<path d="M235,600 C235,570 255,560 270,575 C280,595 280,625 265,630 C245,632 235,620 235,600" vector-effect="non-scaling-stroke"/>
<path d="M185,545 C200,560 220,570 240,565" vector-effect="non-scaling-stroke"/>
<path d="M248,595 C248,585 258,582 262,590 C265,600 258,606 252,604" vector-effect="non-scaling-stroke"/>
<path d="M345,640 C375,610 420,590 470,595 C500,600 520,615 530,630" vector-effect="non-scaling-stroke"/>
<path d="M355,650 C390,670 440,680 480,660" vector-effect="non-scaling-stroke"/>
<path d="M400,635 C400,605 425,595 450,605 C470,620 465,660 445,670 C420,675 400,660 400,635" vector-effect="non-scaling-stroke"/>
<path d="M425,620 C425,612 438,610 440,620 C440,632 428,636 425,628" vector-effect="non-scaling-stroke"/>
<path d="M282,665 C275,680 265,695 259,701 C255,705 250,706 248,706" vector-effect="non-scaling-stroke"/>
<path d="M253,717 C260,720 268,726 274,735" vector-effect="non-scaling-stroke"/>
<path d="M251,769 C265,785 295,800 339,769" vector-effect="non-scaling-stroke"/>
<path d="M251,769 C280,770 310,772 339,769" vector-effect="non-scaling-stroke"/>
<path d="M285,826 C300,820 320,810 342,779" vector-effect="non-scaling-stroke"/>
<path d="M285,789 L295,821" vector-effect="non-scaling-stroke"/>
</g>
<g transform="translate(460.8,40.7) scale(0.25853)" fill="none" stroke="#555555" stroke-width="0.96" stroke-opacity="0.47" stroke-linecap="round" stroke-linejoin="round">
<path d="M201,477 C200,540 200,580 201,607 C190,640 178,665 175,685 C180,715 190,740 201,758 C225,790 245,815 259,836 L274,862 C290,870 300,873 311,873 C350,870 380,865 415,857 C450,840 480,820 508,800 C530,770 545,740 555,717" vector-effect="non-scaling-stroke"/>
<path d="M178,690 C182,720 192,745 203,760 C228,795 248,820 262,840" vector-effect="non-scaling-stroke"/>
<path d="M380,870 C380,905 378,930 340,950" vector-effect="non-scaling-stroke"/>
<path d="M545,760 C525,810 515,880 520,967" vector-effect="non-scaling-stroke"/>
<path d="M210,495 C230,480 250,470 270,460 C280,470 285,480 290,490" vector-effect="non-scaling-stroke"/>
<path d="M235,600 C235,570 255,560 270,575 C280,595 280,625 265,630 C245,632 235,620 235,600" vector-effect="non-scaling-stroke"/>
<path d="M185,545 C200,560 220,570 240,565" vector-effect="non-scaling-stroke"/>
<path d="M248,595 C248,585 258,582 262,590 C265,600 258,606 252,604" vector-effect="non-scaling-stroke"/>
<path d="M345,640 C375,610 420,590 470,595 C500,600 520,615 530,630" vector-effect="non-scaling-stroke"/>
<path d="M355,650 C390,670 440,680 480,660" vector-effect="non-scaling-stroke"/>
<path d="M400,635 C400,605 425,595 450,605 C470,620 465,660 445,670 C420,675 400,660 400,635" vector-effect="non-scaling-stroke"/>
<path d="M425,620 C425,612 438,610 440,620 C440,632 428,636 425,628" vector-effect="non-scaling-stroke"/>
<path d="M282,665 C275,680 265,695 259,701 C255,705 250,706 248,706" vector-effect="non-scaling-stroke"/>
<path d="M253,717 C260,720 268,726 274,735" vector-effect="non-scaling-stroke"/>
<path d="M251,769 C265,785 295,800 339,769" vector-effect="non-scaling-stroke"/>
<path d="M251,769 C280,770 310,772 339,769" vector-effect="non-scaling-stroke"/>
<path d="M285,826 C300,820 320,810 342,779" vector-effect="non-scaling-stroke"/>
<path d="M285,789 L295,821" vector-effect="non-scaling-stroke"/>
</g>
<g transform="translate(459.3,41.1) scale(0.25853)" fill="none" stroke="#555555" stroke-width="0.84" stroke-opacity="0.34" stroke-linecap="round" stroke-linejoin="round">
<path d="M201,477 C200,540 200,580 201,607 C190,640 178,665 175,685 C180,715 190,740 201,758 C225,790 245,815 259,836 L274,862 C290,870 300,873 311,873 C350,870 380,865 415,857 C450,840 480,820 508,800 C530,770 545,740 555,717" vector-effect="non-scaling-stroke"/>
<path d="M178,690 C182,720 192,745 203,760 C228,795 248,820 262,840" vector-effect="non-scaling-stroke"/>
<path d="M380,870 C380,905 378,930 340,950" vector-effect="non-scaling-stroke"/>
<path d="M545,760 C525,810 515,880 520,967" vector-effect="non-scaling-stroke"/>
<path d="M210,495 C230,480 250,470 270,460 C280,470 285,480 290,490" vector-effect="non-scaling-stroke"/>
<path d="M235,600 C235,570 255,560 270,575 C280,595 280,625 265,630 C245,632 235,620 235,600" vector-effect="non-scaling-stroke"/>
<path d="M185,545 C200,560 220,570 240,565" vector-effect="non-scaling-stroke"/>
<path d="M248,595 C248,585 258,582 262,590 C265,600 258,606 252,604" vector-effect="non-scaling-stroke"/>
<path d="M345,640 C375,610 420,590 470,595 C500,600 520,615 530,630" vector-effect="non-scaling-stroke"/>
<path d="M355,650 C390,670 440,680 480,660" vector-effect="non-scaling-stroke"/>
<path d="M400,635 C400,605 425,595 450,605 C470,620 465,660 445,670 C420,675 400,660 400,635" vector-effect="non-scaling-stroke"/>
<path d="M425,620 C425,612 438,610 440,620 C440,632 428,636 425,628" vector-effect="non-scaling-stroke"/>
<path d="M282,665 C275,680 265,695 259,701 C255,705 250,706 248,706" vector-effect="non-scaling-stroke"/>
<path d="M253,717 C260,720 268,726 274,735" vector-effect="non-scaling-stroke"/>
<path d="M251,769 C265,785 295,800 339,769" vector-effect="non-scaling-stroke"/>
<path d="M251,769 C280,770 310,772 339,769" vector-effect="non-scaling-stroke"/>
<path d="M285,826 C300,820 320,810 342,779" vector-effect="non-scaling-stroke"/>
<path d="M285,789 L295,821" vector-effect="non-scaling-stroke"/>
</g>
<g transform="translate(461.6,39.1) scale(0.25853)" fill="none" stroke="#555555" stroke-width="0.84" stroke-opacity="0.26" stroke-linecap="round" stroke-linejoin="round">
<path d="M201,477 C200,540 200,580 201,607 C190,640 178,665 175,685 C180,715 190,740 201,758 C225,790 245,815 259,836 L274,862 C290,870 300,873 311,873 C350,870 380,865 415,857 C450,840 480,820 508,800 C530,770 545,740 555,717" vector-effect="non-scaling-stroke"/>
<path d="M178,690 C182,720 192,745 203,760 C228,795 248,820 262,840" vector-effect="non-scaling-stroke"/>
<path d="M380,870 C380,905 378,930 340,950" vector-effect="non-scaling-stroke"/>
<path d="M545,760 C525,810 515,880 520,967" vector-effect="non-scaling-stroke"/>
<path d="M210,495 C230,480 250,470 270,460 C280,470 285,480 290,490" vector-effect="non-scaling-stroke"/>
<path d="M235,600 C235,570 255,560 270,575 C280,595 280,625 265,630 C245,632 235,620 235,600" vector-effect="non-scaling-stroke"/>
<path d="M185,545 C200,560 220,570 240,565" vector-effect="non-scaling-stroke"/>
<path d="M248,595 C248,585 258,582 262,590 C265,600 258,606 252,604" vector-effect="non-scaling-stroke"/>
<path d="M345,640 C375,610 420,590 470,595 C500,600 520,615 530,630" vector-effect="non-scaling-stroke"/>
<path d="M355,650 C390,670 440,680 480,660" vector-effect="non-scaling-stroke"/>
<path d="M400,635 C400,605 425,595 450,605 C470,620 465,660 445,670 C420,675 400,660 400,635" vector-effect="non-scaling-stroke"/>
<path d="M425,620 C425,612 438,610 440,620 C440,632 428,636 425,628" vector-effect="non-scaling-stroke"/>
<path d="M282,665 C275,680 265,695 259,701 C255,705 250,706 248,706" vector-effect="non-scaling-stroke"/>
<path d="M253,717 C260,720 268,726 274,735" vector-effect="non-scaling-stroke"/>
<path d="M251,769 C265,785 295,800 339,769" vector-effect="non-scaling-stroke"/>
<path d="M251,769 C280,770 310,772 339,769" vector-effect="non-scaling-stroke"/>
<path d="M285,826 C300,820 320,810 342,779" vector-effect="non-scaling-stroke"/>
<path d="M285,789 L295,821" vector-effect="non-scaling-stroke"/>
</g>
<g transform="translate(430,270) scale(0.29994)" fill="none" stroke="#4a3d42" stroke-width="1.30" stroke-opacity="0.90" stroke-linecap="round" stroke-linejoin="round">
<path d="M425,60 C380,65 300,65 245,75 C220,90 210,130 200,170 C180,260 150,380 130,500 C120,560 110,600 100,640" vector-effect="non-scaling-stroke"/>
<path d="M265,195 C230,300 190,420 160,520 C150,580 140,620 130,650" vector-effect="non-scaling-stroke"/>
<path d="M0,670 C60,670 110,670 145,650 C150,600 160,550 160,520" vector-effect="non-scaling-stroke"/>
<path d="M545,60 C580,55 620,55 658,57 C680,75 700,100 706,113 C740,200 760,260 770,297 C800,400 815,470 825,527 C835,580 845,620 857,647 L875,690" vector-effect="non-scaling-stroke"/>
<path d="M642,200 C670,270 690,320 706,367 C730,430 750,470 770,510 C795,560 815,600 833,637 L860,700" vector-effect="non-scaling-stroke"/>
<path d="M720,140 C750,240 780,350 800,430 C815,500 830,560 845,620" vector-effect="non-scaling-stroke"/>
<path d="M275,180 Q290,165 305,180 Q320,192 335,178 Q350,165 365,182 Q380,192 395,180 Q410,168 425,182 Q440,190 455,180 Q470,168 485,180 Q500,190 515,180 Q530,168 545,180 Q560,190 575,180 Q590,170 605,182 Q620,190 635,185 L665,195" vector-effect="non-scaling-stroke"/>
<path d="M270,190 C260,230 270,300 300,350 C330,390 380,400 410,420" vector-effect="non-scaling-stroke"/>
<path d="M640,210 C620,260 600,310 585,350" vector-effect="non-scaling-stroke"/>
<path d="M365,295 C380,260 410,230 440,220 C470,230 500,250 520,260 C520,275 490,270 470,250 C450,235 430,250 400,270 C385,285 370,300 365,295 Z" vector-effect="non-scaling-stroke"/>
<path d="M365,400 C390,450 400,520 380,580 C340,640 290,700 260,760 C240,830 250,880 300,910 C370,930 500,920 600,900 C700,880 780,820 800,740 C800,720 780,715 760,720" vector-effect="non-scaling-stroke"/>
<path d="M555,410 C550,450 545,480 545,490" vector-effect="non-scaling-stroke"/>
<path d="M545,555 C560,620 590,670 630,710" vector-effect="non-scaling-stroke"/>
<path d="M180,795 C300,770 450,745 580,715 C660,710 750,710 815,730" vector-effect="non-scaling-stroke"/>
<path d="M180,795 L185,950 C300,945 500,935 700,935" vector-effect="non-scaling-stroke"/>
<path d="M425,0 C430,30 425,60 410,95" vector-effect="non-scaling-stroke"/>
<path d="M540,0 C540,30 545,60 550,85" vector-effect="non-scaling-stroke"/>
</g>
<g transform="translate(430.8,270.7) scale(0.29994)" fill="none" stroke="#4a3d42" stroke-width="1.04" stroke-opacity="0.50" stroke-linecap="round" stroke-linejoin="round">
<path d="M425,60 C380,65 300,65 245,75 C220,90 210,130 200,170 C180,260 150,380 130,500 C120,560 110,600 100,640" vector-effect="non-scaling-stroke"/>
<path d="M265,195 C230,300 190,420 160,520 C150,580 140,620 130,650" vector-effect="non-scaling-stroke"/>
<path d="M0,670 C60,670 110,670 145,650 C150,600 160,550 160,520" vector-effect="non-scaling-stroke"/>
<path d="M545,60 C580,55 620,55 658,57 C680,75 700,100 706,113 C740,200 760,260 770,297 C800,400 815,470 825,527 C835,580 845,620 857,647 L875,690" vector-effect="non-scaling-stroke"/>
<path d="M642,200 C670,270 690,320 706,367 C730,430 750,470 770,510 C795,560 815,600 833,637 L860,700" vector-effect="non-scaling-stroke"/>
<path d="M720,140 C750,240 780,350 800,430 C815,500 830,560 845,620" vector-effect="non-scaling-stroke"/>
<path d="M275,180 Q290,165 305,180 Q320,192 335,178 Q350,165 365,182 Q380,192 395,180 Q410,168 425,182 Q440,190 455,180 Q470,168 485,180 Q500,190 515,180 Q530,168 545,180 Q560,190 575,180 Q590,170 605,182 Q620,190 635,185 L665,195" vector-effect="non-scaling-stroke"/>
<path d="M270,190 C260,230 270,300 300,350 C330,390 380,400 410,420" vector-effect="non-scaling-stroke"/>
<path d="M640,210 C620,260 600,310 585,350" vector-effect="non-scaling-stroke"/>
<path d="M365,295 C380,260 410,230 440,220 C470,230 500,250 520,260 C520,275 490,270 470,250 C450,235 430,250 400,270 C385,285 370,300 365,295 Z" vector-effect="non-scaling-stroke"/>
<path d="M365,400 C390,450 400,520 380,580 C340,640 290,700 260,760 C240,830 250,880 300,910 C370,930 500,920 600,900 C700,880 780,820 800,740 C800,720 780,715 760,720" vector-effect="non-scaling-stroke"/>
<path d="M555,410 C550,450 545,480 545,490" vector-effect="non-scaling-stroke"/>
<path d="M545,555 C560,620 590,670 630,710" vector-effect="non-scaling-stroke"/>
<path d="M180,795 C300,770 450,745 580,715 C660,710 750,710 815,730" vector-effect="non-scaling-stroke"/>
<path d="M180,795 L185,950 C300,945 500,935 700,935" vector-effect="non-scaling-stroke"/>
<path d="M425,0 C430,30 425,60 410,95" vector-effect="non-scaling-stroke"/>
<path d="M540,0 C540,30 545,60 550,85" vector-effect="non-scaling-stroke"/>
</g>
<g transform="translate(429.3,271.1) scale(0.29994)" fill="none" stroke="#4a3d42" stroke-width="0.91" stroke-opacity="0.36" stroke-linecap="round" stroke-linejoin="round">
<path d="M425,60 C380,65 300,65 245,75 C220,90 210,130 200,170 C180,260 150,380 130,500 C120,560 110,600 100,640" vector-effect="non-scaling-stroke"/>
<path d="M265,195 C230,300 190,420 160,520 C150,580 140,620 130,650" vector-effect="non-scaling-stroke"/>
<path d="M0,670 C60,670 110,670 145,650 C150,600 160,550 160,520" vector-effect="non-scaling-stroke"/>
<path d="M545,60 C580,55 620,55 658,57 C680,75 700,100 706,113 C740,200 760,260 770,297 C800,400 815,470 825,527 C835,580 845,620 857,647 L875,690" vector-effect="non-scaling-stroke"/>
<path d="M642,200 C670,270 690,320 706,367 C730,430 750,470 770,510 C795,560 815,600 833,637 L860,700" vector-effect="non-scaling-stroke"/>
<path d="M720,140 C750,240 780,350 800,430 C815,500 830,560 845,620" vector-effect="non-scaling-stroke"/>
<path d="M275,180 Q290,165 305,180 Q320,192 335,178 Q350,165 365,182 Q380,192 395,180 Q410,168 425,182 Q440,190 455,180 Q470,168 485,180 Q500,190 515,180 Q530,168 545,180 Q560,190 575,180 Q590,170 605,182 Q620,190 635,185 L665,195" vector-effect="non-scaling-stroke"/>
<path d="M270,190 C260,230 270,300 300,350 C330,390 380,400 410,420" vector-effect="non-scaling-stroke"/>
<path d="M640,210 C620,260 600,310 585,350" vector-effect="non-scaling-stroke"/>
<path d="M365,295 C380,260 410,230 440,220 C470,230 500,250 520,260 C520,275 490,270 470,250 C450,235 430,250 400,270 C385,285 370,300 365,295 Z" vector-effect="non-scaling-stroke"/>
<path d="M365,400 C390,450 400,520 380,580 C340,640 290,700 260,760 C240,830 250,880 300,910 C370,930 500,920 600,900 C700,880 780,820 800,740 C800,720 780,715 760,720" vector-effect="non-scaling-stroke"/>
<path d="M555,410 C550,450 545,480 545,490" vector-effect="non-scaling-stroke"/>
<path d="M545,555 C560,620 590,670 630,710" vector-effect="non-scaling-stroke"/>
<path d="M180,795 C300,770 450,745 580,715 C660,710 750,710 815,730" vector-effect="non-scaling-stroke"/>
<path d="M180,795 L185,950 C300,945 500,935 700,935" vector-effect="non-scaling-stroke"/>
<path d="M425,0 C430,30 425,60 410,95" vector-effect="non-scaling-stroke"/>
<path d="M540,0 C540,30 545,60 550,85" vector-effect="non-scaling-stroke"/>
</g>
<g transform="translate(431.6,269.1) scale(0.29994)" fill="none" stroke="#4a3d42" stroke-width="0.91" stroke-opacity="0.27" stroke-linecap="round" stroke-linejoin="round">
<path d="M425,60 C380,65 300,65 245,75 C220,90 210,130 200,170 C180,260 150,380 130,500 C120,560 110,600 100,640" vector-effect="non-scaling-stroke"/>
<path d="M265,195 C230,300 190,420 160,520 C150,580 140,620 130,650" vector-effect="non-scaling-stroke"/>
<path d="M0,670 C60,670 110,670 145,650 C150,600 160,550 160,520" vector-effect="non-scaling-stroke"/>
<path d="M545,60 C580,55 620,55 658,57 C680,75 700,100 706,113 C740,200 760,260 770,297 C800,400 815,470 825,527 C835,580 845,620 857,647 L875,690" vector-effect="non-scaling-stroke"/>
<path d="M642,200 C670,270 690,320 706,367 C730,430 750,470 770,510 C795,560 815,600 833,637 L860,700" vector-effect="non-scaling-stroke"/>
<path d="M720,140 C750,240 780,350 800,430 C815,500 830,560 845,620" vector-effect="non-scaling-stroke"/>
<path d="M275,180 Q290,165 305,180 Q320,192 335,178 Q350,165 365,182 Q380,192 395,180 Q410,168 425,182 Q440,190 455,180 Q470,168 485,180 Q500,190 515,180 Q530,168 545,180 Q560,190 575,180 Q590,170 605,182 Q620,190 635,185 L665,195" vector-effect="non-scaling-stroke"/>
<path d="M270,190 C260,230 270,300 300,350 C330,390 380,400 410,420" vector-effect="non-scaling-stroke"/>
<path d="M640,210 C620,260 600,310 585,350" vector-effect="non-scaling-stroke"/>
<path d="M365,295 C380,260 410,230 440,220 C470,230 500,250 520,260 C520,275 490,270 470,250 C450,235 430,250 400,270 C385,285 370,300 365,295 Z" vector-effect="non-scaling-stroke"/>
<path d="M365,400 C390,450 400,520 380,580 C340,640 290,700 260,760 C240,830 250,880 300,910 C370,930 500,920 600,900 C700,880 780,820 800,740 C800,720 780,715 760,720" vector-effect="non-scaling-stroke"/>
<path d="M555,410 C550,450 545,480 545,490" vector-effect="non-scaling-stroke"/>
<path d="M545,555 C560,620 590,670 630,710" vector-effect="non-scaling-stroke"/>
<path d="M180,795 C300,770 450,745 580,715 C660,710 750,710 815,730" vector-effect="non-scaling-stroke"/>
<path d="M180,795 L185,950 C300,945 500,935 700,935" vector-effect="non-scaling-stroke"/>
<path d="M425,0 C430,30 425,60 410,95" vector-effect="non-scaling-stroke"/>
<path d="M540,0 C540,30 545,60 550,85" vector-effect="non-scaling-stroke"/>
</g>
<g transform="translate(430,270) scale(0.29994)" fill="none" stroke="#8a8084" stroke-width="1.00" stroke-opacity="0.80" stroke-linecap="round" stroke-linejoin="round">
<path d="M650,223 C665,300 680,370 690,415 C710,500 740,580 770,647" vector-effect="non-scaling-stroke"/>
<path d="M265,195 C240,280 210,380 180,470" vector-effect="non-scaling-stroke"/>
</g>
<g transform="translate(430.8,270.7) scale(0.29994)" fill="none" stroke="#8a8084" stroke-width="0.80" stroke-opacity="0.44" stroke-linecap="round" stroke-linejoin="round">
<path d="M650,223 C665,300 680,370 690,415 C710,500 740,580 770,647" vector-effect="non-scaling-stroke"/>
<path d="M265,195 C240,280 210,380 180,470" vector-effect="non-scaling-stroke"/>
</g>
<g transform="translate(429.3,271.1) scale(0.29994)" fill="none" stroke="#8a8084" stroke-width="0.70" stroke-opacity="0.32" stroke-linecap="round" stroke-linejoin="round">
<path d="M650,223 C665,300 680,370 690,415 C710,500 740,580 770,647" vector-effect="non-scaling-stroke"/>
<path d="M265,195 C240,280 210,380 180,470" vector-effect="non-scaling-stroke"/>
</g>
<g transform="translate(431.6,269.1) scale(0.29994)" fill="none" stroke="#8a8084" stroke-width="0.70" stroke-opacity="0.24" stroke-linecap="round" stroke-linejoin="round">
<path d="M650,223 C665,300 680,370 690,415 C710,500 740,580 770,647" vector-effect="non-scaling-stroke"/>
<path d="M265,195 C240,280 210,380 180,470" vector-effect="non-scaling-stroke"/>
</g>
<g transform="translate(40,300) scale(0.29994)" fill="none" stroke="#4a3d42" stroke-width="1.30" stroke-opacity="0.90" stroke-linecap="round" stroke-linejoin="round">
<path d="M160,110 C200,85 270,110 290,170 C300,230 270,250 230,250 C180,245 145,200 145,160 C145,125 155,105 175,95" vector-effect="non-scaling-stroke"/>
<path d="M175,105 C210,95 265,120 275,175 C280,220 255,240 225,238 C185,232 160,200 158,165" vector-effect="non-scaling-stroke"/>
<path d="M200,240 C240,290 300,350 345,395 L330,480" vector-effect="non-scaling-stroke"/>
<path d="M65,375 C150,390 250,410 340,420 C400,425 460,425 520,425" vector-effect="non-scaling-stroke"/>
<path d="M65,425 C130,440 250,470 400,490 C450,500 490,505 520,505" vector-effect="non-scaling-stroke"/>
<path d="M55,380 L60,430 M80,375 L85,440" vector-effect="non-scaling-stroke"/>
<path d="M210,420 C300,450 400,470 470,490" vector-effect="non-scaling-stroke"/>
<path d="M240,410 L235,485 M330,400 L325,480" vector-effect="non-scaling-stroke"/>
<path d="M525,420 C520,460 515,520 530,560 C560,590 700,590 860,585 C880,560 885,480 880,440 C860,420 700,410 540,415 Z" vector-effect="non-scaling-stroke"/>
<path d="M512,440 C510,480 510,540 520,575 C560,600 720,600 870,598" vector-effect="non-scaling-stroke"/>
<path d="M548,440 L545,545 C600,560 750,565 850,568 L858,455 C750,440 620,438 548,440 Z" vector-effect="non-scaling-stroke"/>
<path d="M680,570 L665,630" vector-effect="non-scaling-stroke"/>
<path d="M480,960 C490,820 520,700 570,660 C620,630 720,630 800,640 C850,650 880,680 885,720 C890,800 885,900 885,967" vector-effect="non-scaling-stroke"/>
<path d="M880,450 C920,450 950,455 967,460" vector-effect="non-scaling-stroke"/>
<path d="M860,540 C900,540 940,535 967,530" vector-effect="non-scaling-stroke"/>
</g>
<g transform="translate(40.8,300.7) scale(0.29994)" fill="none" stroke="#4a3d42" stroke-width="1.04" stroke-opacity="0.50" stroke-linecap="round" stroke-linejoin="round">
<path d="M160,110 C200,85 270,110 290,170 C300,230 270,250 230,250 C180,245 145,200 145,160 C145,125 155,105 175,95" vector-effect="non-scaling-stroke"/>
<path d="M175,105 C210,95 265,120 275,175 C280,220 255,240 225,238 C185,232 160,200 158,165" vector-effect="non-scaling-stroke"/>
<path d="M200,240 C240,290 300,350 345,395 L330,480" vector-effect="non-scaling-stroke"/>
<path d="M65,375 C150,390 250,410 340,420 C400,425 460,425 520,425" vector-effect="non-scaling-stroke"/>
<path d="M65,425 C130,440 250,470 400,490 C450,500 490,505 520,505" vector-effect="non-scaling-stroke"/>
<path d="M55,380 L60,430 M80,375 L85,440" vector-effect="non-scaling-stroke"/>
<path d="M210,420 C300,450 400,470 470,490" vector-effect="non-scaling-stroke"/>
<path d="M240,410 L235,485 M330,400 L325,480" vector-effect="non-scaling-stroke"/>
<path d="M525,420 C520,460 515,520 530,560 C560,590 700,590 860,585 C880,560 885,480 880,440 C860,420 700,410 540,415 Z" vector-effect="non-scaling-stroke"/>
<path d="M512,440 C510,480 510,540 520,575 C560,600 720,600 870,598" vector-effect="non-scaling-stroke"/>
<path d="M548,440 L545,545 C600,560 750,565 850,568 L858,455 C750,440 620,438 548,440 Z" vector-effect="non-scaling-stroke"/>
<path d="M680,570 L665,630" vector-effect="non-scaling-stroke"/>
<path d="M480,960 C490,820 520,700 570,660 C620,630 720,630 800,640 C850,650 880,680 885,720 C890,800 885,900 885,967" vector-effect="non-scaling-stroke"/>
<path d="M880,450 C920,450 950,455 967,460" vector-effect="non-scaling-stroke"/>
<path d="M860,540 C900,540 940,535 967,530" vector-effect="non-scaling-stroke"/>
</g>
<g transform="translate(39.3,301.1) scale(0.29994)" fill="none" stroke="#4a3d42" stroke-width="0.91" stroke-opacity="0.36" stroke-linecap="round" stroke-linejoin="round">
<path d="M160,110 C200,85 270,110 290,170 C300,230 270,250 230,250 C180,245 145,200 145,160 C145,125 155,105 175,95" vector-effect="non-scaling-stroke"/>
<path d="M175,105 C210,95 265,120 275,175 C280,220 255,240 225,238 C185,232 160,200 158,165" vector-effect="non-scaling-stroke"/>
<path d="M200,240 C240,290 300,350 345,395 L330,480" vector-effect="non-scaling-stroke"/>
<path d="M65,375 C150,390 250,410 340,420 C400,425 460,425 520,425" vector-effect="non-scaling-stroke"/>
<path d="M65,425 C130,440 250,470 400,490 C450,500 490,505 520,505" vector-effect="non-scaling-stroke"/>
<path d="M55,380 L60,430 M80,375 L85,440" vector-effect="non-scaling-stroke"/>
<path d="M210,420 C300,450 400,470 470,490" vector-effect="non-scaling-stroke"/>
<path d="M240,410 L235,485 M330,400 L325,480" vector-effect="non-scaling-stroke"/>
<path d="M525,420 C520,460 515,520 530,560 C560,590 700,590 860,585 C880,560 885,480 880,440 C860,420 700,410 540,415 Z" vector-effect="non-scaling-stroke"/>
<path d="M512,440 C510,480 510,540 520,575 C560,600 720,600 870,598" vector-effect="non-scaling-stroke"/>
<path d="M548,440 L545,545 C600,560 750,565 850,568 L858,455 C750,440 620,438 548,440 Z" vector-effect="non-scaling-stroke"/>
<path d="M680,570 L665,630" vector-effect="non-scaling-stroke"/>
<path d="M480,960 C490,820 520,700 570,660 C620,630 720,630 800,640 C850,650 880,680 885,720 C890,800 885,900 885,967" vector-effect="non-scaling-stroke"/>
<path d="M880,450 C920,450 950,455 967,460" vector-effect="non-scaling-stroke"/>
<path d="M860,540 C900,540 940,535 967,530" vector-effect="non-scaling-stroke"/>
</g>
<g transform="translate(41.6,299.1) scale(0.29994)" fill="none" stroke="#4a3d42" stroke-width="0.91" stroke-opacity="0.27" stroke-linecap="round" stroke-linejoin="round">
<path d="M160,110 C200,85 270,110 290,170 C300,230 270,250 230,250 C180,245 145,200 145,160 C145,125 155,105 175,95" vector-effect="non-scaling-stroke"/>
<path d="M175,105 C210,95 265,120 275,175 C280,220 255,240 225,238 C185,232 160,200 158,165" vector-effect="non-scaling-stroke"/>
<path d="M200,240 C240,290 300,350 345,395 L330,480" vector-effect="non-scaling-stroke"/>
<path d="M65,375 C150,390 250,410 340,420 C400,425 460,425 520,425" vector-effect="non-scaling-stroke"/>
<path d="M65,425 C130,440 250,470 400,490 C450,500 490,505 520,505" vector-effect="non-scaling-stroke"/>
<path d="M55,380 L60,430 M80,375 L85,440" vector-effect="non-scaling-stroke"/>
<path d="M210,420 C300,450 400,470 470,490" vector-effect="non-scaling-stroke"/>
<path d="M240,410 L235,485 M330,400 L325,480" vector-effect="non-scaling-stroke"/>
<path d="M525,420 C520,460 515,520 530,560 C560,590 700,590 860,585 C880,560 885,480 880,440 C860,420 700,410 540,415 Z" vector-effect="non-scaling-stroke"/>
<path d="M512,440 C510,480 510,540 520,575 C560,600 720,600 870,598" vector-effect="non-scaling-stroke"/>
<path d="M548,440 L545,545 C600,560 750,565 850,568 L858,455 C750,440 620,438 548,440 Z" vector-effect="non-scaling-stroke"/>
<path d="M680,570 L665,630" vector-effect="non-scaling-stroke"/>
<path d="M480,960 C490,820 520,700 570,660 C620,630 720,630 800,640 C850,650 880,680 885,720 C890,800 885,900 885,967" vector-effect="non-scaling-stroke"/>
<path d="M880,450 C920,450 950,455 967,460" vector-effect="non-scaling-stroke"/>
<path d="M860,540 C900,540 940,535 967,530" vector-effect="non-scaling-stroke"/>
</g>
<g transform="translate(40,300) scale(0.29994)" fill="none" stroke="#8a8084" stroke-width="0.90" stroke-opacity="0.75" stroke-linecap="round" stroke-linejoin="round">
<path d="M590,460 L580,545 M605,455 L598,548 M625,455 L615,550 M660,455 L650,550 M675,458 L668,548 M700,455 L690,552 M720,455 L712,550 M740,455 L730,555 M780,458 L770,555 M795,462 L790,550 M810,460 L800,555" vector-effect="non-scaling-stroke"/>
<path d="M620,700 C600,780 570,880 550,960" vector-effect="non-scaling-stroke"/>
<path d="M635,705 C615,790 585,880 565,960" vector-effect="non-scaling-stroke"/>
<path d="M660,700 C640,780 610,880 590,960" vector-effect="non-scaling-stroke"/>
<path d="M430,460 C460,470 490,480 510,500" vector-effect="non-scaling-stroke"/>
<path d="M55,380 C52,400 54,420 58,432" vector-effect="non-scaling-stroke"/>
</g>
<g transform="translate(40.8,300.7) scale(0.29994)" fill="none" stroke="#8a8084" stroke-width="0.72" stroke-opacity="0.41" stroke-linecap="round" stroke-linejoin="round">
<path d="M590,460 L580,545 M605,455 L598,548 M625,455 L615,550 M660,455 L650,550 M675,458 L668,548 M700,455 L690,552 M720,455 L712,550 M740,455 L730,555 M780,458 L770,555 M795,462 L790,550 M810,460 L800,555" vector-effect="non-scaling-stroke"/>
<path d="M620,700 C600,780 570,880 550,960" vector-effect="non-scaling-stroke"/>
<path d="M635,705 C615,790 585,880 565,960" vector-effect="non-scaling-stroke"/>
<path d="M660,700 C640,780 610,880 590,960" vector-effect="non-scaling-stroke"/>
<path d="M430,460 C460,470 490,480 510,500" vector-effect="non-scaling-stroke"/>
<path d="M55,380 C52,400 54,420 58,432" vector-effect="non-scaling-stroke"/>
</g>
<g transform="translate(39.3,301.1) scale(0.29994)" fill="none" stroke="#8a8084" stroke-width="0.63" stroke-opacity="0.30" stroke-linecap="round" stroke-linejoin="round">
<path d="M590,460 L580,545 M605,455 L598,548 M625,455 L615,550 M660,455 L650,550 M675,458 L668,548 M700,455 L690,552 M720,455 L712,550 M740,455 L730,555 M780,458 L770,555 M795,462 L790,550 M810,460 L800,555" vector-effect="non-scaling-stroke"/>
<path d="M620,700 C600,780 570,880 550,960" vector-effect="non-scaling-stroke"/>
<path d="M635,705 C615,790 585,880 565,960" vector-effect="non-scaling-stroke"/>
<path d="M660,700 C640,780 610,880 590,960" vector-effect="non-scaling-stroke"/>
<path d="M430,460 C460,470 490,480 510,500" vector-effect="non-scaling-stroke"/>
<path d="M55,380 C52,400 54,420 58,432" vector-effect="non-scaling-stroke"/>
</g>
<g transform="translate(41.6,299.1) scale(0.29994)" fill="none" stroke="#8a8084" stroke-width="0.63" stroke-opacity="0.22" stroke-linecap="round" stroke-linejoin="round">
<path d="M590,460 L580,545 M605,455 L598,548 M625,455 L615,550 M660,455 L650,550 M675,458 L668,548 M700,455 L690,552 M720,455 L712,550 M740,455 L730,555 M780,458 L770,555 M795,462 L790,550 M810,460 L800,555" vector-effect="non-scaling-stroke"/>
<path d="M620,700 C600,780 570,880 550,960" vector-effect="non-scaling-stroke"/>
<path d="M635,705 C615,790 585,880 565,960" vector-effect="non-scaling-stroke"/>
<path d="M660,700 C640,780 610,880 590,960" vector-effect="non-scaling-stroke"/>
<path d="M430,460 C460,470 490,480 510,500" vector-effect="non-scaling-stroke"/>
<path d="M55,380 C52,400 54,420 58,432" vector-effect="non-scaling-stroke"/>
</g>
<g transform="translate(300,330) scale(0.29994)" fill="none" stroke="#4a3d42" stroke-width="1.30" stroke-opacity="0.90" stroke-linecap="round" stroke-linejoin="round">
<path d="M380,165 C385,125 460,115 540,120 C580,130 585,170 560,195 C520,220 450,225 410,205 C390,195 380,180 385,160" vector-effect="non-scaling-stroke"/>
<path d="M400,215 C330,260 260,310 210,370 C195,390 195,410 200,425" vector-effect="non-scaling-stroke"/>
<path d="M620,0 C590,100 570,220 560,330 C560,380 560,420 580,450 L560,465 C480,470 400,475 320,480 C240,485 170,490 130,500 C80,520 40,545 0,560" vector-effect="non-scaling-stroke"/>
<path d="M700,0 C660,100 630,250 590,400 C580,420 570,440 555,450" vector-effect="non-scaling-stroke"/>
<path d="M0,345 C100,355 250,380 440,395" vector-effect="non-scaling-stroke"/>
<path d="M0,440 C100,440 200,435 300,430 C400,420 450,410 490,400" vector-effect="non-scaling-stroke"/>
<path d="M391,233 C330,280 280,320 252,340 C235,355 225,365 219,373 C208,390 202,405 199,419" vector-effect="non-scaling-stroke"/>
<path d="M364,247 C330,275 300,300 278,320 C265,335 255,350 245,366" vector-effect="non-scaling-stroke"/>
<path d="M26,346 C120,360 220,375 298,383 C380,390 440,394 497,396" vector-effect="non-scaling-stroke"/>
<path d="M33,356 C120,365 180,372 232,376 C300,382 350,388 398,393" vector-effect="non-scaling-stroke"/>
<path d="M298,373 L291,459 M303,375 L296,455 M444,386 L441,455" vector-effect="non-scaling-stroke"/>
<path d="M298,409 L444,399 M298,446 L444,436" vector-effect="non-scaling-stroke"/>
<path d="M457,406 L461,436 M484,409 L480,432" vector-effect="non-scaling-stroke"/>
<path d="M20,442 C120,438 220,435 298,432 C380,425 440,405 490,392" vector-effect="non-scaling-stroke"/>
<path d="M-15,564 C53,548 112,516 156,493 C212,481 272,477 334,477 C420,472 490,467 530,465 L577,445" vector-effect="non-scaling-stroke"/>
<path d="M510,339 L543,336 M530,445 L563,439" vector-effect="non-scaling-stroke"/>
<path d="M-7,508 C33,481 73,461 124,445" vector-effect="non-scaling-stroke"/>
<path d="M76,419 C92,417 112,429 132,457" vector-effect="non-scaling-stroke"/>
<path d="M710,50 C720,120 760,180 800,200 C820,210 835,215 840,220" vector-effect="non-scaling-stroke"/>
<path d="M800,200 C830,300 820,400 780,420 C730,480 700,550 680,600 C670,660 700,710 750,720 C830,725 900,720 967,700" vector-effect="non-scaling-stroke"/>
<path d="M610,590 L610,760 L620,780 L967,790" vector-effect="non-scaling-stroke"/>
<path d="M610,590 C700,580 830,540 967,515" vector-effect="non-scaling-stroke"/>
<path d="M620,740 C750,730 870,730 967,730" vector-effect="non-scaling-stroke"/>
<path d="M610,790 L605,967" vector-effect="non-scaling-stroke"/>
<path d="M640,800 C640,850 660,900 700,967" vector-effect="non-scaling-stroke"/>
<path d="M967,720 C920,800 880,870 850,967" vector-effect="non-scaling-stroke"/>
<path d="M20,560 C20,700 15,850 10,967" vector-effect="non-scaling-stroke"/>
<path d="M805,95 L880,30 L950,60 L940,70 L880,45 L800,95 Z" vector-effect="non-scaling-stroke"/>
</g>
<g transform="translate(300.8,330.7) scale(0.29994)" fill="none" stroke="#4a3d42" stroke-width="1.04" stroke-opacity="0.50" stroke-linecap="round" stroke-linejoin="round">
<path d="M380,165 C385,125 460,115 540,120 C580,130 585,170 560,195 C520,220 450,225 410,205 C390,195 380,180 385,160" vector-effect="non-scaling-stroke"/>
<path d="M400,215 C330,260 260,310 210,370 C195,390 195,410 200,425" vector-effect="non-scaling-stroke"/>
<path d="M620,0 C590,100 570,220 560,330 C560,380 560,420 580,450 L560,465 C480,470 400,475 320,480 C240,485 170,490 130,500 C80,520 40,545 0,560" vector-effect="non-scaling-stroke"/>
<path d="M700,0 C660,100 630,250 590,400 C580,420 570,440 555,450" vector-effect="non-scaling-stroke"/>
<path d="M0,345 C100,355 250,380 440,395" vector-effect="non-scaling-stroke"/>
<path d="M0,440 C100,440 200,435 300,430 C400,420 450,410 490,400" vector-effect="non-scaling-stroke"/>
<path d="M391,233 C330,280 280,320 252,340 C235,355 225,365 219,373 C208,390 202,405 199,419" vector-effect="non-scaling-stroke"/>
<path d="M364,247 C330,275 300,300 278,320 C265,335 255,350 245,366" vector-effect="non-scaling-stroke"/>
<path d="M26,346 C120,360 220,375 298,383 C380,390 440,394 497,396" vector-effect="non-scaling-stroke"/>
<path d="M33,356 C120,365 180,372 232,376 C300,382 350,388 398,393" vector-effect="non-scaling-stroke"/>
<path d="M298,373 L291,459 M303,375 L296,455 M444,386 L441,455" vector-effect="non-scaling-stroke"/>
<path d="M298,409 L444,399 M298,446 L444,436" vector-effect="non-scaling-stroke"/>
<path d="M457,406 L461,436 M484,409 L480,432" vector-effect="non-scaling-stroke"/>
<path d="M20,442 C120,438 220,435 298,432 C380,425 440,405 490,392" vector-effect="non-scaling-stroke"/>
<path d="M-15,564 C53,548 112,516 156,493 C212,481 272,477 334,477 C420,472 490,467 530,465 L577,445" vector-effect="non-scaling-stroke"/>
<path d="M510,339 L543,336 M530,445 L563,439" vector-effect="non-scaling-stroke"/>
<path d="M-7,508 C33,481 73,461 124,445" vector-effect="non-scaling-stroke"/>
<path d="M76,419 C92,417 112,429 132,457" vector-effect="non-scaling-stroke"/>
<path d="M710,50 C720,120 760,180 800,200 C820,210 835,215 840,220" vector-effect="non-scaling-stroke"/>
<path d="M800,200 C830,300 820,400 780,420 C730,480 700,550 680,600 C670,660 700,710 750,720 C830,725 900,720 967,700" vector-effect="non-scaling-stroke"/>
<path d="M610,590 L610,760 L620,780 L967,790" vector-effect="non-scaling-stroke"/>
<path d="M610,590 C700,580 830,540 967,515" vector-effect="non-scaling-stroke"/>
<path d="M620,740 C750,730 870,730 967,730" vector-effect="non-scaling-stroke"/>
<path d="M610,790 L605,967" vector-effect="non-scaling-stroke"/>
<path d="M640,800 C640,850 660,900 700,967" vector-effect="non-scaling-stroke"/>
<path d="M967,720 C920,800 880,870 850,967" vector-effect="non-scaling-stroke"/>
<path d="M20,560 C20,700 15,850 10,967" vector-effect="non-scaling-stroke"/>
<path d="M805,95 L880,30 L950,60 L940,70 L880,45 L800,95 Z" vector-effect="non-scaling-stroke"/>
</g>
<g transform="translate(299.3,331.1) scale(0.29994)" fill="none" stroke="#4a3d42" stroke-width="0.91" stroke-opacity="0.36" stroke-linecap="round" stroke-linejoin="round">
<path d="M380,165 C385,125 460,115 540,120 C580,130 585,170 560,195 C520,220 450,225 410,205 C390,195 380,180 385,160" vector-effect="non-scaling-stroke"/>
<path d="M400,215 C330,260 260,310 210,370 C195,390 195,410 200,425" vector-effect="non-scaling-stroke"/>
<path d="M620,0 C590,100 570,220 560,330 C560,380 560,420 580,450 L560,465 C480,470 400,475 320,480 C240,485 170,490 130,500 C80,520 40,545 0,560" vector-effect="non-scaling-stroke"/>
<path d="M700,0 C660,100 630,250 590,400 C580,420 570,440 555,450" vector-effect="non-scaling-stroke"/>
<path d="M0,345 C100,355 250,380 440,395" vector-effect="non-scaling-stroke"/>
<path d="M0,440 C100,440 200,435 300,430 C400,420 450,410 490,400" vector-effect="non-scaling-stroke"/>
<path d="M391,233 C330,280 280,320 252,340 C235,355 225,365 219,373 C208,390 202,405 199,419" vector-effect="non-scaling-stroke"/>
<path d="M364,247 C330,275 300,300 278,320 C265,335 255,350 245,366" vector-effect="non-scaling-stroke"/>
<path d="M26,346 C120,360 220,375 298,383 C380,390 440,394 497,396" vector-effect="non-scaling-stroke"/>
<path d="M33,356 C120,365 180,372 232,376 C300,382 350,388 398,393" vector-effect="non-scaling-stroke"/>
<path d="M298,373 L291,459 M303,375 L296,455 M444,386 L441,455" vector-effect="non-scaling-stroke"/>
<path d="M298,409 L444,399 M298,446 L444,436" vector-effect="non-scaling-stroke"/>
<path d="M457,406 L461,436 M484,409 L480,432" vector-effect="non-scaling-stroke"/>
<path d="M20,442 C120,438 220,435 298,432 C380,425 440,405 490,392" vector-effect="non-scaling-stroke"/>
<path d="M-15,564 C53,548 112,516 156,493 C212,481 272,477 334,477 C420,472 490,467 530,465 L577,445" vector-effect="non-scaling-stroke"/>
<path d="M510,339 L543,336 M530,445 L563,439" vector-effect="non-scaling-stroke"/>
<path d="M-7,508 C33,481 73,461 124,445" vector-effect="non-scaling-stroke"/>
<path d="M76,419 C92,417 112,429 132,457" vector-effect="non-scaling-stroke"/>
<path d="M710,50 C720,120 760,180 800,200 C820,210 835,215 840,220" vector-effect="non-scaling-stroke"/>
<path d="M800,200 C830,300 820,400 780,420 C730,480 700,550 680,600 C670,660 700,710 750,720 C830,725 900,720 967,700" vector-effect="non-scaling-stroke"/>
<path d="M610,590 L610,760 L620,780 L967,790" vector-effect="non-scaling-stroke"/>
<path d="M610,590 C700,580 830,540 967,515" vector-effect="non-scaling-stroke"/>
<path d="M620,740 C750,730 870,730 967,730" vector-effect="non-scaling-stroke"/>
<path d="M610,790 L605,967" vector-effect="non-scaling-stroke"/>
<path d="M640,800 C640,850 660,900 700,967" vector-effect="non-scaling-stroke"/>
<path d="M967,720 C920,800 880,870 850,967" vector-effect="non-scaling-stroke"/>
<path d="M20,560 C20,700 15,850 10,967" vector-effect="non-scaling-stroke"/>
<path d="M805,95 L880,30 L950,60 L940,70 L880,45 L800,95 Z" vector-effect="non-scaling-stroke"/>
</g>
<g transform="translate(301.6,329.1) scale(0.29994)" fill="none" stroke="#4a3d42" stroke-width="0.91" stroke-opacity="0.27" stroke-linecap="round" stroke-linejoin="round">
<path d="M380,165 C385,125 460,115 540,120 C580,130 585,170 560,195 C520,220 450,225 410,205 C390,195 380,180 385,160" vector-effect="non-scaling-stroke"/>
<path d="M400,215 C330,260 260,310 210,370 C195,390 195,410 200,425" vector-effect="non-scaling-stroke"/>
<path d="M620,0 C590,100 570,220 560,330 C560,380 560,420 580,450 L560,465 C480,470 400,475 320,480 C240,485 170,490 130,500 C80,520 40,545 0,560" vector-effect="non-scaling-stroke"/>
<path d="M700,0 C660,100 630,250 590,400 C580,420 570,440 555,450" vector-effect="non-scaling-stroke"/>
<path d="M0,345 C100,355 250,380 440,395" vector-effect="non-scaling-stroke"/>
<path d="M0,440 C100,440 200,435 300,430 C400,420 450,410 490,400" vector-effect="non-scaling-stroke"/>
<path d="M391,233 C330,280 280,320 252,340 C235,355 225,365 219,373 C208,390 202,405 199,419" vector-effect="non-scaling-stroke"/>
<path d="M364,247 C330,275 300,300 278,320 C265,335 255,350 245,366" vector-effect="non-scaling-stroke"/>
<path d="M26,346 C120,360 220,375 298,383 C380,390 440,394 497,396" vector-effect="non-scaling-stroke"/>
<path d="M33,356 C120,365 180,372 232,376 C300,382 350,388 398,393" vector-effect="non-scaling-stroke"/>
<path d="M298,373 L291,459 M303,375 L296,455 M444,386 L441,455" vector-effect="non-scaling-stroke"/>
<path d="M298,409 L444,399 M298,446 L444,436" vector-effect="non-scaling-stroke"/>
<path d="M457,406 L461,436 M484,409 L480,432" vector-effect="non-scaling-stroke"/>
<path d="M20,442 C120,438 220,435 298,432 C380,425 440,405 490,392" vector-effect="non-scaling-stroke"/>
<path d="M-15,564 C53,548 112,516 156,493 C212,481 272,477 334,477 C420,472 490,467 530,465 L577,445" vector-effect="non-scaling-stroke"/>
<path d="M510,339 L543,336 M530,445 L563,439" vector-effect="non-scaling-stroke"/>
<path d="M-7,508 C33,481 73,461 124,445" vector-effect="non-scaling-stroke"/>
<path d="M76,419 C92,417 112,429 132,457" vector-effect="non-scaling-stroke"/>
<path d="M710,50 C720,120 760,180 800,200 C820,210 835,215 840,220" vector-effect="non-scaling-stroke"/>
<path d="M800,200 C830,300 820,400 780,420 C730,480 700,550 680,600 C670,660 700,710 750,720 C830,725 900,720 967,700" vector-effect="non-scaling-stroke"/>
<path d="M610,590 L610,760 L620,780 L967,790" vector-effect="non-scaling-stroke"/>
<path d="M610,590 C700,580 830,540 967,515" vector-effect="non-scaling-stroke"/>
<path d="M620,740 C750,730 870,730 967,730" vector-effect="non-scaling-stroke"/>
<path d="M610,790 L605,967" vector-effect="non-scaling-stroke"/>
<path d="M640,800 C640,850 660,900 700,967" vector-effect="non-scaling-stroke"/>
<path d="M967,720 C920,800 880,870 850,967" vector-effect="non-scaling-stroke"/>
<path d="M20,560 C20,700 15,850 10,967" vector-effect="non-scaling-stroke"/>
<path d="M805,95 L880,30 L950,60 L940,70 L880,45 L800,95 Z" vector-effect="non-scaling-stroke"/>
</g>
<g transform="translate(90,480) scale(0.29994)" fill="none" stroke="#4a3d42" stroke-width="1.30" stroke-opacity="0.90" stroke-linecap="round" stroke-linejoin="round">
<path d="M310,380 C320,250 330,150 360,90 C390,50 430,40 520,35 C600,30 670,40 700,70 C720,100 720,200 720,300 C715,400 705,500 710,580 C730,700 780,800 830,880 C850,910 870,940 880,967" vector-effect="non-scaling-stroke"/>
<path d="M330,330 C335,220 350,140 380,85 C410,55 460,45 540,42" vector-effect="non-scaling-stroke"/>
<path d="M280,485 C280,430 310,405 340,410 C380,420 395,470 385,520 C375,555 340,565 310,555 C290,545 280,520 280,485" vector-effect="non-scaling-stroke"/>
<path d="M295,480 C300,440 330,425 355,435 C375,450 380,500 365,530 C350,550 320,550 305,530" vector-effect="non-scaling-stroke"/>
<path d="M255,590 L285,505" vector-effect="non-scaling-stroke"/>
<path d="M260,590 C330,600 420,605 560,600" vector-effect="non-scaling-stroke"/>
<path d="M265,600 C330,610 400,612 500,605" vector-effect="non-scaling-stroke"/>
<path d="M80,967 C120,850 170,720 230,630 C260,615 400,630 520,650 C560,680 570,800 575,967" vector-effect="non-scaling-stroke"/>
<path d="M100,967 C140,850 180,730 240,640" vector-effect="non-scaling-stroke"/>
<path d="M240,625 C300,635 400,645 500,660" vector-effect="non-scaling-stroke"/>
<path d="M480,740 C470,820 460,900 455,967" vector-effect="non-scaling-stroke"/>
<path d="M490,745 C480,820 470,900 465,967" vector-effect="non-scaling-stroke"/>
</g>
<g transform="translate(90.8,480.7) scale(0.29994)" fill="none" stroke="#4a3d42" stroke-width="1.04" stroke-opacity="0.50" stroke-linecap="round" stroke-linejoin="round">
<path d="M310,380 C320,250 330,150 360,90 C390,50 430,40 520,35 C600,30 670,40 700,70 C720,100 720,200 720,300 C715,400 705,500 710,580 C730,700 780,800 830,880 C850,910 870,940 880,967" vector-effect="non-scaling-stroke"/>
<path d="M330,330 C335,220 350,140 380,85 C410,55 460,45 540,42" vector-effect="non-scaling-stroke"/>
<path d="M280,485 C280,430 310,405 340,410 C380,420 395,470 385,520 C375,555 340,565 310,555 C290,545 280,520 280,485" vector-effect="non-scaling-stroke"/>
<path d="M295,480 C300,440 330,425 355,435 C375,450 380,500 365,530 C350,550 320,550 305,530" vector-effect="non-scaling-stroke"/>
<path d="M255,590 L285,505" vector-effect="non-scaling-stroke"/>
<path d="M260,590 C330,600 420,605 560,600" vector-effect="non-scaling-stroke"/>
<path d="M265,600 C330,610 400,612 500,605" vector-effect="non-scaling-stroke"/>
<path d="M80,967 C120,850 170,720 230,630 C260,615 400,630 520,650 C560,680 570,800 575,967" vector-effect="non-scaling-stroke"/>
<path d="M100,967 C140,850 180,730 240,640" vector-effect="non-scaling-stroke"/>
<path d="M240,625 C300,635 400,645 500,660" vector-effect="non-scaling-stroke"/>
<path d="M480,740 C470,820 460,900 455,967" vector-effect="non-scaling-stroke"/>
<path d="M490,745 C480,820 470,900 465,967" vector-effect="non-scaling-stroke"/>
</g>
<g transform="translate(89.3,481.1) scale(0.29994)" fill="none" stroke="#4a3d42" stroke-width="0.91" stroke-opacity="0.36" stroke-linecap="round" stroke-linejoin="round">
<path d="M310,380 C320,250 330,150 360,90 C390,50 430,40 520,35 C600,30 670,40 700,70 C720,100 720,200 720,300 C715,400 705,500 710,580 C730,700 780,800 830,880 C850,910 870,940 880,967" vector-effect="non-scaling-stroke"/>
<path d="M330,330 C335,220 350,140 380,85 C410,55 460,45 540,42" vector-effect="non-scaling-stroke"/>
<path d="M280,485 C280,430 310,405 340,410 C380,420 395,470 385,520 C375,555 340,565 310,555 C290,545 280,520 280,485" vector-effect="non-scaling-stroke"/>
<path d="M295,480 C300,440 330,425 355,435 C375,450 380,500 365,530 C350,550 320,550 305,530" vector-effect="non-scaling-stroke"/>
<path d="M255,590 L285,505" vector-effect="non-scaling-stroke"/>
<path d="M260,590 C330,600 420,605 560,600" vector-effect="non-scaling-stroke"/>
<path d="M265,600 C330,610 400,612 500,605" vector-effect="non-scaling-stroke"/>
<path d="M80,967 C120,850 170,720 230,630 C260,615 400,630 520,650 C560,680 570,800 575,967" vector-effect="non-scaling-stroke"/>
<path d="M100,967 C140,850 180,730 240,640" vector-effect="non-scaling-stroke"/>
<path d="M240,625 C300,635 400,645 500,660" vector-effect="non-scaling-stroke"/>
<path d="M480,740 C470,820 460,900 455,967" vector-effect="non-scaling-stroke"/>
<path d="M490,745 C480,820 470,900 465,967" vector-effect="non-scaling-stroke"/>
</g>
<g transform="translate(91.6,479.1) scale(0.29994)" fill="none" stroke="#4a3d42" stroke-width="0.91" stroke-opacity="0.27" stroke-linecap="round" stroke-linejoin="round">
<path d="M310,380 C320,250 330,150 360,90 C390,50 430,40 520,35 C600,30 670,40 700,70 C720,100 720,200 720,300 C715,400 705,500 710,580 C730,700 780,800 830,880 C850,910 870,940 880,967" vector-effect="non-scaling-stroke"/>
<path d="M330,330 C335,220 350,140 380,85 C410,55 460,45 540,42" vector-effect="non-scaling-stroke"/>
<path d="M280,485 C280,430 310,405 340,410 C380,420 395,470 385,520 C375,555 340,565 310,555 C290,545 280,520 280,485" vector-effect="non-scaling-stroke"/>
<path d="M295,480 C300,440 330,425 355,435 C375,450 380,500 365,530 C350,550 320,550 305,530" vector-effect="non-scaling-stroke"/>
<path d="M255,590 L285,505" vector-effect="non-scaling-stroke"/>
<path d="M260,590 C330,600 420,605 560,600" vector-effect="non-scaling-stroke"/>
<path d="M265,600 C330,610 400,612 500,605" vector-effect="non-scaling-stroke"/>
<path d="M80,967 C120,850 170,720 230,630 C260,615 400,630 520,650 C560,680 570,800 575,967" vector-effect="non-scaling-stroke"/>
<path d="M100,967 C140,850 180,730 240,640" vector-effect="non-scaling-stroke"/>
<path d="M240,625 C300,635 400,645 500,660" vector-effect="non-scaling-stroke"/>
<path d="M480,740 C470,820 460,900 455,967" vector-effect="non-scaling-stroke"/>
<path d="M490,745 C480,820 470,900 465,967" vector-effect="non-scaling-stroke"/>
</g>
<g transform="translate(90,480) scale(0.29994)" fill="none" stroke="#8a8084" stroke-width="1.00" stroke-opacity="0.80" stroke-linecap="round" stroke-linejoin="round">
<path d="M460,110 C430,200 400,300 385,360" vector-effect="non-scaling-stroke"/>
<path d="M495,115 C470,200 440,300 420,400" vector-effect="non-scaling-stroke"/>
<path d="M470,130 C445,210 420,300 400,380" vector-effect="non-scaling-stroke"/>
<path d="M430,400 C470,470 520,540 550,600" vector-effect="non-scaling-stroke"/>
<path d="M310,395 C330,385 360,380 380,380" vector-effect="non-scaling-stroke"/>
<path d="M310,720 C290,800 270,880 255,967" vector-effect="non-scaling-stroke"/>
<path d="M325,720 C305,800 285,880 270,967" vector-effect="non-scaling-stroke"/>
<path d="M300,500 C340,600 420,680 550,720" vector-effect="non-scaling-stroke"/>
<path d="M720,580 C740,650 760,700 790,760" vector-effect="non-scaling-stroke"/>
</g>
<g transform="translate(90.8,480.7) scale(0.29994)" fill="none" stroke="#8a8084" stroke-width="0.80" stroke-opacity="0.44" stroke-linecap="round" stroke-linejoin="round">
<path d="M460,110 C430,200 400,300 385,360" vector-effect="non-scaling-stroke"/>
<path d="M495,115 C470,200 440,300 420,400" vector-effect="non-scaling-stroke"/>
<path d="M470,130 C445,210 420,300 400,380" vector-effect="non-scaling-stroke"/>
<path d="M430,400 C470,470 520,540 550,600" vector-effect="non-scaling-stroke"/>
<path d="M310,395 C330,385 360,380 380,380" vector-effect="non-scaling-stroke"/>
<path d="M310,720 C290,800 270,880 255,967" vector-effect="non-scaling-stroke"/>
<path d="M325,720 C305,800 285,880 270,967" vector-effect="non-scaling-stroke"/>
<path d="M300,500 C340,600 420,680 550,720" vector-effect="non-scaling-stroke"/>
<path d="M720,580 C740,650 760,700 790,760" vector-effect="non-scaling-stroke"/>
</g>
<g transform="translate(89.3,481.1) scale(0.29994)" fill="none" stroke="#8a8084" stroke-width="0.70" stroke-opacity="0.32" stroke-linecap="round" stroke-linejoin="round">
<path d="M460,110 C430,200 400,300 385,360" vector-effect="non-scaling-stroke"/>
<path d="M495,115 C470,200 440,300 420,400" vector-effect="non-scaling-stroke"/>
<path d="M470,130 C445,210 420,300 400,380" vector-effect="non-scaling-stroke"/>
<path d="M430,400 C470,470 520,540 550,600" vector-effect="non-scaling-stroke"/>
<path d="M310,395 C330,385 360,380 380,380" vector-effect="non-scaling-stroke"/>
<path d="M310,720 C290,800 270,880 255,967" vector-effect="non-scaling-stroke"/>
<path d="M325,720 C305,800 285,880 270,967" vector-effect="non-scaling-stroke"/>
<path d="M300,500 C340,600 420,680 550,720" vector-effect="non-scaling-stroke"/>
<path d="M720,580 C740,650 760,700 790,760" vector-effect="non-scaling-stroke"/>
</g>
<g transform="translate(91.6,479.1) scale(0.29994)" fill="none" stroke="#8a8084" stroke-width="0.70" stroke-opacity="0.24" stroke-linecap="round" stroke-linejoin="round">
<path d="M460,110 C430,200 400,300 385,360" vector-effect="non-scaling-stroke"/>
<path d="M495,115 C470,200 440,300 420,400" vector-effect="non-scaling-stroke"/>
<path d="M470,130 C445,210 420,300 400,380" vector-effect="non-scaling-stroke"/>
<path d="M430,400 C470,470 520,540 550,600" vector-effect="non-scaling-stroke"/>
<path d="M310,395 C330,385 360,380 380,380" vector-effect="non-scaling-stroke"/>
<path d="M310,720 C290,800 270,880 255,967" vector-effect="non-scaling-stroke"/>
<path d="M325,720 C305,800 285,880 270,967" vector-effect="non-scaling-stroke"/>
<path d="M300,500 C340,600 420,680 550,720" vector-effect="non-scaling-stroke"/>
<path d="M720,580 C740,650 760,700 790,760" vector-effect="non-scaling-stroke"/>
</g>
<g transform="translate(90,677) scale(0.29994)" fill="none" stroke="#4a3d42" stroke-width="1.30" stroke-opacity="0.90" stroke-linecap="round" stroke-linejoin="round">
<path d="M200,0 C150,100 100,250 60,380" vector-effect="non-scaling-stroke"/>
<path d="M60,380 C180,400 300,420 450,430" vector-effect="non-scaling-stroke"/>
<path d="M450,430 C500,380 560,320 575,280 C580,200 570,100 555,30 C540,10 520,0 500,0" vector-effect="non-scaling-stroke"/>
<path d="M305,60 C280,180 250,300 225,400" vector-effect="non-scaling-stroke"/>
<path d="M480,80 C465,200 455,320 450,430" vector-effect="non-scaling-stroke"/>
<path d="M185,420 C150,520 100,650 75,780 C70,850 90,900 150,910 C200,915 240,900 270,860 C320,780 350,700 355,600 C360,530 340,490 330,470 C300,480 260,550 240,640 C230,720 230,800 245,860" vector-effect="non-scaling-stroke"/>
<path d="M170,430 C130,540 90,680 80,800 C85,870 120,900 200,905" vector-effect="non-scaling-stroke"/>
<path d="M178,425 C140,530 100,660 88,790" vector-effect="non-scaling-stroke"/>
<path d="M215,905 C290,850 345,750 362,620 C368,540 360,500 345,465" vector-effect="non-scaling-stroke"/>
<path d="M232,870 C300,800 340,720 350,600" vector-effect="non-scaling-stroke"/>
<path d="M320,480 C280,540 250,620 245,720 C245,780 250,830 260,860" vector-effect="non-scaling-stroke"/>
<path d="M570,345 C650,370 800,390 967,395" vector-effect="non-scaling-stroke"/>
<path d="M560,340 C700,380 850,400 967,405" vector-effect="non-scaling-stroke"/>
<path d="M725,0 C760,100 820,220 880,300 C910,340 940,365 967,380" vector-effect="non-scaling-stroke"/>
<path d="M850,225 L967,230 M890,290 L967,285 M890,210 L967,215" vector-effect="non-scaling-stroke"/>
</g>
<g transform="translate(90.8,677.7) scale(0.29994)" fill="none" stroke="#4a3d42" stroke-width="1.04" stroke-opacity="0.50" stroke-linecap="round" stroke-linejoin="round">
<path d="M200,0 C150,100 100,250 60,380" vector-effect="non-scaling-stroke"/>
<path d="M60,380 C180,400 300,420 450,430" vector-effect="non-scaling-stroke"/>
<path d="M450,430 C500,380 560,320 575,280 C580,200 570,100 555,30 C540,10 520,0 500,0" vector-effect="non-scaling-stroke"/>
<path d="M305,60 C280,180 250,300 225,400" vector-effect="non-scaling-stroke"/>
<path d="M480,80 C465,200 455,320 450,430" vector-effect="non-scaling-stroke"/>
<path d="M185,420 C150,520 100,650 75,780 C70,850 90,900 150,910 C200,915 240,900 270,860 C320,780 350,700 355,600 C360,530 340,490 330,470 C300,480 260,550 240,640 C230,720 230,800 245,860" vector-effect="non-scaling-stroke"/>
<path d="M170,430 C130,540 90,680 80,800 C85,870 120,900 200,905" vector-effect="non-scaling-stroke"/>
<path d="M178,425 C140,530 100,660 88,790" vector-effect="non-scaling-stroke"/>
<path d="M215,905 C290,850 345,750 362,620 C368,540 360,500 345,465" vector-effect="non-scaling-stroke"/>
<path d="M232,870 C300,800 340,720 350,600" vector-effect="non-scaling-stroke"/>
<path d="M320,480 C280,540 250,620 245,720 C245,780 250,830 260,860" vector-effect="non-scaling-stroke"/>
<path d="M570,345 C650,370 800,390 967,395" vector-effect="non-scaling-stroke"/>
<path d="M560,340 C700,380 850,400 967,405" vector-effect="non-scaling-stroke"/>
<path d="M725,0 C760,100 820,220 880,300 C910,340 940,365 967,380" vector-effect="non-scaling-stroke"/>
<path d="M850,225 L967,230 M890,290 L967,285 M890,210 L967,215" vector-effect="non-scaling-stroke"/>
</g>
<g transform="translate(89.3,678.1) scale(0.29994)" fill="none" stroke="#4a3d42" stroke-width="0.91" stroke-opacity="0.36" stroke-linecap="round" stroke-linejoin="round">
<path d="M200,0 C150,100 100,250 60,380" vector-effect="non-scaling-stroke"/>
<path d="M60,380 C180,400 300,420 450,430" vector-effect="non-scaling-stroke"/>
<path d="M450,430 C500,380 560,320 575,280 C580,200 570,100 555,30 C540,10 520,0 500,0" vector-effect="non-scaling-stroke"/>
<path d="M305,60 C280,180 250,300 225,400" vector-effect="non-scaling-stroke"/>
<path d="M480,80 C465,200 455,320 450,430" vector-effect="non-scaling-stroke"/>
<path d="M185,420 C150,520 100,650 75,780 C70,850 90,900 150,910 C200,915 240,900 270,860 C320,780 350,700 355,600 C360,530 340,490 330,470 C300,480 260,550 240,640 C230,720 230,800 245,860" vector-effect="non-scaling-stroke"/>
<path d="M170,430 C130,540 90,680 80,800 C85,870 120,900 200,905" vector-effect="non-scaling-stroke"/>
<path d="M178,425 C140,530 100,660 88,790" vector-effect="non-scaling-stroke"/>
<path d="M215,905 C290,850 345,750 362,620 C368,540 360,500 345,465" vector-effect="non-scaling-stroke"/>
<path d="M232,870 C300,800 340,720 350,600" vector-effect="non-scaling-stroke"/>
<path d="M320,480 C280,540 250,620 245,720 C245,780 250,830 260,860" vector-effect="non-scaling-stroke"/>
<path d="M570,345 C650,370 800,390 967,395" vector-effect="non-scaling-stroke"/>
<path d="M560,340 C700,380 850,400 967,405" vector-effect="non-scaling-stroke"/>
<path d="M725,0 C760,100 820,220 880,300 C910,340 940,365 967,380" vector-effect="non-scaling-stroke"/>
<path d="M850,225 L967,230 M890,290 L967,285 M890,210 L967,215" vector-effect="non-scaling-stroke"/>
</g>
<g transform="translate(91.6,676.1) scale(0.29994)" fill="none" stroke="#4a3d42" stroke-width="0.91" stroke-opacity="0.27" stroke-linecap="round" stroke-linejoin="round">
<path d="M200,0 C150,100 100,250 60,380" vector-effect="non-scaling-stroke"/>
<path d="M60,380 C180,400 300,420 450,430" vector-effect="non-scaling-stroke"/>
<path d="M450,430 C500,380 560,320 575,280 C580,200 570,100 555,30 C540,10 520,0 500,0" vector-effect="non-scaling-stroke"/>
<path d="M305,60 C280,180 250,300 225,400" vector-effect="non-scaling-stroke"/>
<path d="M480,80 C465,200 455,320 450,430" vector-effect="non-scaling-stroke"/>
<path d="M185,420 C150,520 100,650 75,780 C70,850 90,900 150,910 C200,915 240,900 270,860 C320,780 350,700 355,600 C360,530 340,490 330,470 C300,480 260,550 240,640 C230,720 230,800 245,860" vector-effect="non-scaling-stroke"/>
<path d="M170,430 C130,540 90,680 80,800 C85,870 120,900 200,905" vector-effect="non-scaling-stroke"/>
<path d="M178,425 C140,530 100,660 88,790" vector-effect="non-scaling-stroke"/>
<path d="M215,905 C290,850 345,750 362,620 C368,540 360,500 345,465" vector-effect="non-scaling-stroke"/>
<path d="M232,870 C300,800 340,720 350,600" vector-effect="non-scaling-stroke"/>
<path d="M320,480 C280,540 250,620 245,720 C245,780 250,830 260,860" vector-effect="non-scaling-stroke"/>
<path d="M570,345 C650,370 800,390 967,395" vector-effect="non-scaling-stroke"/>
<path d="M560,340 C700,380 850,400 967,405" vector-effect="non-scaling-stroke"/>
<path d="M725,0 C760,100 820,220 880,300 C910,340 940,365 967,380" vector-effect="non-scaling-stroke"/>
<path d="M850,225 L967,230 M890,290 L967,285 M890,210 L967,215" vector-effect="non-scaling-stroke"/>
</g>
<g transform="translate(320,560) scale(0.29994)" fill="none" stroke="#4a3d42" stroke-width="1.30" stroke-opacity="0.90" stroke-linecap="round" stroke-linejoin="round">
<path d="M545,20 L545,115" vector-effect="non-scaling-stroke"/>
<path d="M545,20 C700,15 850,10 967,10" vector-effect="non-scaling-stroke"/>
<path d="M550,35 C700,35 850,40 967,45" vector-effect="non-scaling-stroke"/>
<path d="M600,35 C580,60 580,90 590,120" vector-effect="non-scaling-stroke"/>
<path d="M860,0 C800,100 760,250 720,400 C690,470 660,520 630,545" vector-effect="non-scaling-stroke"/>
<path d="M967,150 C880,250 800,350 740,440 C700,500 670,560 650,620" vector-effect="non-scaling-stroke"/>
<path d="M830,60 C780,200 740,330 700,460" vector-effect="non-scaling-stroke"/>
<path d="M630,545 C600,540 580,570 570,600 L530,675" vector-effect="non-scaling-stroke"/>
<path d="M545,700 L535,770 L560,795 L640,830 L690,770 L700,740 L600,700 Z" vector-effect="non-scaling-stroke"/>
<path d="M560,720 L650,800 M600,760 L560,800 M620,700 L640,830" vector-effect="non-scaling-stroke"/>
<path d="M90,620 C300,625 500,625 720,590" vector-effect="non-scaling-stroke"/>
<path d="M125,600 L400,610" vector-effect="non-scaling-stroke"/>
<path d="M130,680 C300,670 500,660 700,650" vector-effect="non-scaling-stroke"/>
<path d="M200,730 C400,725 600,715 840,700" vector-effect="non-scaling-stroke"/>
<path d="M0,770 C200,775 500,770 967,740" vector-effect="non-scaling-stroke"/>
<path d="M0,460 C40,550 100,680 160,730 C200,760 260,775 300,780" vector-effect="non-scaling-stroke"/>
<path d="M967,300 C920,350 890,420 880,500 C870,600 880,700 900,767" vector-effect="non-scaling-stroke"/>
<path d="M940,180 C920,250 910,320 910,400" vector-effect="non-scaling-stroke"/>
</g>
<g transform="translate(320.8,560.7) scale(0.29994)" fill="none" stroke="#4a3d42" stroke-width="1.04" stroke-opacity="0.50" stroke-linecap="round" stroke-linejoin="round">
<path d="M545,20 L545,115" vector-effect="non-scaling-stroke"/>
<path d="M545,20 C700,15 850,10 967,10" vector-effect="non-scaling-stroke"/>
<path d="M550,35 C700,35 850,40 967,45" vector-effect="non-scaling-stroke"/>
<path d="M600,35 C580,60 580,90 590,120" vector-effect="non-scaling-stroke"/>
<path d="M860,0 C800,100 760,250 720,400 C690,470 660,520 630,545" vector-effect="non-scaling-stroke"/>
<path d="M967,150 C880,250 800,350 740,440 C700,500 670,560 650,620" vector-effect="non-scaling-stroke"/>
<path d="M830,60 C780,200 740,330 700,460" vector-effect="non-scaling-stroke"/>
<path d="M630,545 C600,540 580,570 570,600 L530,675" vector-effect="non-scaling-stroke"/>
<path d="M545,700 L535,770 L560,795 L640,830 L690,770 L700,740 L600,700 Z" vector-effect="non-scaling-stroke"/>
<path d="M560,720 L650,800 M600,760 L560,800 M620,700 L640,830" vector-effect="non-scaling-stroke"/>
<path d="M90,620 C300,625 500,625 720,590" vector-effect="non-scaling-stroke"/>
<path d="M125,600 L400,610" vector-effect="non-scaling-stroke"/>
<path d="M130,680 C300,670 500,660 700,650" vector-effect="non-scaling-stroke"/>
<path d="M200,730 C400,725 600,715 840,700" vector-effect="non-scaling-stroke"/>
<path d="M0,770 C200,775 500,770 967,740" vector-effect="non-scaling-stroke"/>
<path d="M0,460 C40,550 100,680 160,730 C200,760 260,775 300,780" vector-effect="non-scaling-stroke"/>
<path d="M967,300 C920,350 890,420 880,500 C870,600 880,700 900,767" vector-effect="non-scaling-stroke"/>
<path d="M940,180 C920,250 910,320 910,400" vector-effect="non-scaling-stroke"/>
</g>
<g transform="translate(319.3,561.1) scale(0.29994)" fill="none" stroke="#4a3d42" stroke-width="0.91" stroke-opacity="0.36" stroke-linecap="round" stroke-linejoin="round">
<path d="M545,20 L545,115" vector-effect="non-scaling-stroke"/>
<path d="M545,20 C700,15 850,10 967,10" vector-effect="non-scaling-stroke"/>
<path d="M550,35 C700,35 850,40 967,45" vector-effect="non-scaling-stroke"/>
<path d="M600,35 C580,60 580,90 590,120" vector-effect="non-scaling-stroke"/>
<path d="M860,0 C800,100 760,250 720,400 C690,470 660,520 630,545" vector-effect="non-scaling-stroke"/>
<path d="M967,150 C880,250 800,350 740,440 C700,500 670,560 650,620" vector-effect="non-scaling-stroke"/>
<path d="M830,60 C780,200 740,330 700,460" vector-effect="non-scaling-stroke"/>
<path d="M630,545 C600,540 580,570 570,600 L530,675" vector-effect="non-scaling-stroke"/>
<path d="M545,700 L535,770 L560,795 L640,830 L690,770 L700,740 L600,700 Z" vector-effect="non-scaling-stroke"/>
<path d="M560,720 L650,800 M600,760 L560,800 M620,700 L640,830" vector-effect="non-scaling-stroke"/>
<path d="M90,620 C300,625 500,625 720,590" vector-effect="non-scaling-stroke"/>
<path d="M125,600 L400,610" vector-effect="non-scaling-stroke"/>
<path d="M130,680 C300,670 500,660 700,650" vector-effect="non-scaling-stroke"/>
<path d="M200,730 C400,725 600,715 840,700" vector-effect="non-scaling-stroke"/>
<path d="M0,770 C200,775 500,770 967,740" vector-effect="non-scaling-stroke"/>
<path d="M0,460 C40,550 100,680 160,730 C200,760 260,775 300,780" vector-effect="non-scaling-stroke"/>
<path d="M967,300 C920,350 890,420 880,500 C870,600 880,700 900,767" vector-effect="non-scaling-stroke"/>
<path d="M940,180 C920,250 910,320 910,400" vector-effect="non-scaling-stroke"/>
</g>
<g transform="translate(321.6,559.1) scale(0.29994)" fill="none" stroke="#4a3d42" stroke-width="0.91" stroke-opacity="0.27" stroke-linecap="round" stroke-linejoin="round">
<path d="M545,20 L545,115" vector-effect="non-scaling-stroke"/>
<path d="M545,20 C700,15 850,10 967,10" vector-effect="non-scaling-stroke"/>
<path d="M550,35 C700,35 850,40 967,45" vector-effect="non-scaling-stroke"/>
<path d="M600,35 C580,60 580,90 590,120" vector-effect="non-scaling-stroke"/>
<path d="M860,0 C800,100 760,250 720,400 C690,470 660,520 630,545" vector-effect="non-scaling-stroke"/>
<path d="M967,150 C880,250 800,350 740,440 C700,500 670,560 650,620" vector-effect="non-scaling-stroke"/>
<path d="M830,60 C780,200 740,330 700,460" vector-effect="non-scaling-stroke"/>
<path d="M630,545 C600,540 580,570 570,600 L530,675" vector-effect="non-scaling-stroke"/>
<path d="M545,700 L535,770 L560,795 L640,830 L690,770 L700,740 L600,700 Z" vector-effect="non-scaling-stroke"/>
<path d="M560,720 L650,800 M600,760 L560,800 M620,700 L640,830" vector-effect="non-scaling-stroke"/>
<path d="M90,620 C300,625 500,625 720,590" vector-effect="non-scaling-stroke"/>
<path d="M125,600 L400,610" vector-effect="non-scaling-stroke"/>
<path d="M130,680 C300,670 500,660 700,650" vector-effect="non-scaling-stroke"/>
<path d="M200,730 C400,725 600,715 840,700" vector-effect="non-scaling-stroke"/>
<path d="M0,770 C200,775 500,770 967,740" vector-effect="non-scaling-stroke"/>
<path d="M0,460 C40,550 100,680 160,730 C200,760 260,775 300,780" vector-effect="non-scaling-stroke"/>
<path d="M967,300 C920,350 890,420 880,500 C870,600 880,700 900,767" vector-effect="non-scaling-stroke"/>
<path d="M940,180 C920,250 910,320 910,400" vector-effect="non-scaling-stroke"/>
</g>
<g transform="translate(320,560) scale(0.29994)" fill="none" stroke="#8a8084" stroke-width="1.00" stroke-opacity="0.80" stroke-linecap="round" stroke-linejoin="round">
<path d="M530,120 C600,200 660,300 690,420" vector-effect="non-scaling-stroke"/>
<path d="M545,185 C600,280 650,380 670,460" vector-effect="non-scaling-stroke"/>
<path d="M590,120 C680,200 740,300 760,420 C780,520 770,600 740,660" vector-effect="non-scaling-stroke"/>
<path d="M600,125 C690,210 745,310 765,430" vector-effect="non-scaling-stroke"/>
</g>
<g transform="translate(320.8,560.7) scale(0.29994)" fill="none" stroke="#8a8084" stroke-width="0.80" stroke-opacity="0.44" stroke-linecap="round" stroke-linejoin="round">
<path d="M530,120 C600,200 660,300 690,420" vector-effect="non-scaling-stroke"/>
<path d="M545,185 C600,280 650,380 670,460" vector-effect="non-scaling-stroke"/>
<path d="M590,120 C680,200 740,300 760,420 C780,520 770,600 740,660" vector-effect="non-scaling-stroke"/>
<path d="M600,125 C690,210 745,310 765,430" vector-effect="non-scaling-stroke"/>
</g>
<g transform="translate(319.3,561.1) scale(0.29994)" fill="none" stroke="#8a8084" stroke-width="0.70" stroke-opacity="0.32" stroke-linecap="round" stroke-linejoin="round">
<path d="M530,120 C600,200 660,300 690,420" vector-effect="non-scaling-stroke"/>
<path d="M545,185 C600,280 650,380 670,460" vector-effect="non-scaling-stroke"/>
<path d="M590,120 C680,200 740,300 760,420 C780,520 770,600 740,660" vector-effect="non-scaling-stroke"/>
<path d="M600,125 C690,210 745,310 765,430" vector-effect="non-scaling-stroke"/>
</g>
<g transform="translate(321.6,559.1) scale(0.29994)" fill="none" stroke="#8a8084" stroke-width="0.70" stroke-opacity="0.24" stroke-linecap="round" stroke-linejoin="round">
<path d="M530,120 C600,200 660,300 690,420" vector-effect="non-scaling-stroke"/>
<path d="M545,185 C600,280 650,380 670,460" vector-effect="non-scaling-stroke"/>
<path d="M590,120 C680,200 740,300 760,420 C780,520 770,600 740,660" vector-effect="non-scaling-stroke"/>
<path d="M600,125 C690,210 745,310 765,430" vector-effect="non-scaling-stroke"/>
</g>
<g transform="translate(380,677) scale(0.29994)" fill="none" stroke="#4a3d42" stroke-width="1.30" stroke-opacity="0.90" stroke-linecap="round" stroke-linejoin="round">
<path d="M125,395 L115,620 M175,395 L160,620" vector-effect="non-scaling-stroke"/>
<path d="M100,620 L85,730 L150,730 L160,620 Z" vector-effect="non-scaling-stroke"/>
<path d="M70,670 L160,680" vector-effect="non-scaling-stroke"/>
<path d="M470,390 L440,680 M505,400 L470,680 M490,400 L455,680" vector-effect="non-scaling-stroke"/>
<path d="M420,680 L410,785 L475,785 L490,680" vector-effect="non-scaling-stroke"/>
<path d="M420,690 L480,690" vector-effect="non-scaling-stroke"/>
<path d="M430,690 L418,780 M445,685 L432,782 M460,688 L448,780 M475,690 L465,775" vector-effect="non-scaling-stroke"/>
<path d="M110,630 L95,725 M125,625 L112,728 M140,628 L130,725" vector-effect="non-scaling-stroke"/>
<path d="M500,400 L465,680 M480,395 L448,670" vector-effect="non-scaling-stroke"/>
<path d="M0,380 C200,385 400,385 640,360" vector-effect="non-scaling-stroke"/>
<path d="M0,335 C200,330 400,325 640,310" vector-effect="non-scaling-stroke"/>
<path d="M690,0 C680,100 690,250 705,370" vector-effect="non-scaling-stroke"/>
<path d="M720,10 C800,150 880,300 920,450 C950,550 960,620 967,680" vector-effect="non-scaling-stroke"/>
<path d="M790,370 C780,450 800,530 860,580 C900,610 940,630 967,640" vector-effect="non-scaling-stroke"/>
<path d="M860,0 C900,80 940,180 967,250" vector-effect="non-scaling-stroke"/>
<path d="M700,340 C800,330 900,320 967,318" vector-effect="non-scaling-stroke"/>
<path d="M740,370 C850,360 920,355 967,355" vector-effect="non-scaling-stroke"/>
</g>
<g transform="translate(380.8,677.7) scale(0.29994)" fill="none" stroke="#4a3d42" stroke-width="1.04" stroke-opacity="0.50" stroke-linecap="round" stroke-linejoin="round">
<path d="M125,395 L115,620 M175,395 L160,620" vector-effect="non-scaling-stroke"/>
<path d="M100,620 L85,730 L150,730 L160,620 Z" vector-effect="non-scaling-stroke"/>
<path d="M70,670 L160,680" vector-effect="non-scaling-stroke"/>
<path d="M470,390 L440,680 M505,400 L470,680 M490,400 L455,680" vector-effect="non-scaling-stroke"/>
<path d="M420,680 L410,785 L475,785 L490,680" vector-effect="non-scaling-stroke"/>
<path d="M420,690 L480,690" vector-effect="non-scaling-stroke"/>
<path d="M430,690 L418,780 M445,685 L432,782 M460,688 L448,780 M475,690 L465,775" vector-effect="non-scaling-stroke"/>
<path d="M110,630 L95,725 M125,625 L112,728 M140,628 L130,725" vector-effect="non-scaling-stroke"/>
<path d="M500,400 L465,680 M480,395 L448,670" vector-effect="non-scaling-stroke"/>
<path d="M0,380 C200,385 400,385 640,360" vector-effect="non-scaling-stroke"/>
<path d="M0,335 C200,330 400,325 640,310" vector-effect="non-scaling-stroke"/>
<path d="M690,0 C680,100 690,250 705,370" vector-effect="non-scaling-stroke"/>
<path d="M720,10 C800,150 880,300 920,450 C950,550 960,620 967,680" vector-effect="non-scaling-stroke"/>
<path d="M790,370 C780,450 800,530 860,580 C900,610 940,630 967,640" vector-effect="non-scaling-stroke"/>
<path d="M860,0 C900,80 940,180 967,250" vector-effect="non-scaling-stroke"/>
<path d="M700,340 C800,330 900,320 967,318" vector-effect="non-scaling-stroke"/>
<path d="M740,370 C850,360 920,355 967,355" vector-effect="non-scaling-stroke"/>
</g>
<g transform="translate(379.3,678.1) scale(0.29994)" fill="none" stroke="#4a3d42" stroke-width="0.91" stroke-opacity="0.36" stroke-linecap="round" stroke-linejoin="round">
<path d="M125,395 L115,620 M175,395 L160,620" vector-effect="non-scaling-stroke"/>
<path d="M100,620 L85,730 L150,730 L160,620 Z" vector-effect="non-scaling-stroke"/>
<path d="M70,670 L160,680" vector-effect="non-scaling-stroke"/>
<path d="M470,390 L440,680 M505,400 L470,680 M490,400 L455,680" vector-effect="non-scaling-stroke"/>
<path d="M420,680 L410,785 L475,785 L490,680" vector-effect="non-scaling-stroke"/>
<path d="M420,690 L480,690" vector-effect="non-scaling-stroke"/>
<path d="M430,690 L418,780 M445,685 L432,782 M460,688 L448,780 M475,690 L465,775" vector-effect="non-scaling-stroke"/>
<path d="M110,630 L95,725 M125,625 L112,728 M140,628 L130,725" vector-effect="non-scaling-stroke"/>
<path d="M500,400 L465,680 M480,395 L448,670" vector-effect="non-scaling-stroke"/>
<path d="M0,380 C200,385 400,385 640,360" vector-effect="non-scaling-stroke"/>
<path d="M0,335 C200,330 400,325 640,310" vector-effect="non-scaling-stroke"/>
<path d="M690,0 C680,100 690,250 705,370" vector-effect="non-scaling-stroke"/>
<path d="M720,10 C800,150 880,300 920,450 C950,550 960,620 967,680" vector-effect="non-scaling-stroke"/>
<path d="M790,370 C780,450 800,530 860,580 C900,610 940,630 967,640" vector-effect="non-scaling-stroke"/>
<path d="M860,0 C900,80 940,180 967,250" vector-effect="non-scaling-stroke"/>
<path d="M700,340 C800,330 900,320 967,318" vector-effect="non-scaling-stroke"/>
<path d="M740,370 C850,360 920,355 967,355" vector-effect="non-scaling-stroke"/>
</g>
<g transform="translate(381.6,676.1) scale(0.29994)" fill="none" stroke="#4a3d42" stroke-width="0.91" stroke-opacity="0.27" stroke-linecap="round" stroke-linejoin="round">
<path d="M125,395 L115,620 M175,395 L160,620" vector-effect="non-scaling-stroke"/>
<path d="M100,620 L85,730 L150,730 L160,620 Z" vector-effect="non-scaling-stroke"/>
<path d="M70,670 L160,680" vector-effect="non-scaling-stroke"/>
<path d="M470,390 L440,680 M505,400 L470,680 M490,400 L455,680" vector-effect="non-scaling-stroke"/>
<path d="M420,680 L410,785 L475,785 L490,680" vector-effect="non-scaling-stroke"/>
<path d="M420,690 L480,690" vector-effect="non-scaling-stroke"/>
<path d="M430,690 L418,780 M445,685 L432,782 M460,688 L448,780 M475,690 L465,775" vector-effect="non-scaling-stroke"/>
<path d="M110,630 L95,725 M125,625 L112,728 M140,628 L130,725" vector-effect="non-scaling-stroke"/>
<path d="M500,400 L465,680 M480,395 L448,670" vector-effect="non-scaling-stroke"/>
<path d="M0,380 C200,385 400,385 640,360" vector-effect="non-scaling-stroke"/>
<path d="M0,335 C200,330 400,325 640,310" vector-effect="non-scaling-stroke"/>
<path d="M690,0 C680,100 690,250 705,370" vector-effect="non-scaling-stroke"/>
<path d="M720,10 C800,150 880,300 920,450 C950,550 960,620 967,680" vector-effect="non-scaling-stroke"/>
<path d="M790,370 C780,450 800,530 860,580 C900,610 940,630 967,640" vector-effect="non-scaling-stroke"/>
<path d="M860,0 C900,80 940,180 967,250" vector-effect="non-scaling-stroke"/>
<path d="M700,340 C800,330 900,320 967,318" vector-effect="non-scaling-stroke"/>
<path d="M740,370 C850,360 920,355 967,355" vector-effect="non-scaling-stroke"/>
</g>
<g transform="translate(580,560) scale(0.31027)" fill="none" stroke="#4a3d42" stroke-width="1.30" stroke-opacity="0.90" stroke-linecap="round" stroke-linejoin="round">
<path d="M0,40 C150,35 300,30 430,25" vector-effect="non-scaling-stroke"/>
<path d="M20,700 C10,550 20,420 60,340 C120,230 250,150 430,120" vector-effect="non-scaling-stroke"/>
<path d="M30,700 C20,560 30,430 70,350 C130,240 260,170 420,140" vector-effect="non-scaling-stroke"/>
<path d="M40,380 C100,260 220,190 300,200" vector-effect="non-scaling-stroke"/>
<path d="M190,0 C120,100 60,170 40,260 C30,320 40,370 50,400 C100,470 180,560 230,700 C260,800 290,900 310,967" vector-effect="non-scaling-stroke"/>
<path d="M150,330 C200,400 260,520 300,650 C320,750 330,850 340,967" vector-effect="non-scaling-stroke"/>
<path d="M220,0 C200,100 180,200 150,330" vector-effect="non-scaling-stroke"/>
<path d="M0,680 C300,680 600,670 940,660" vector-effect="non-scaling-stroke"/>
<path d="M60,730 C300,715 600,700 967,700" vector-effect="non-scaling-stroke"/>
<path d="M810,510 C800,560 810,610 830,640 L830,700" vector-effect="non-scaling-stroke"/>
<path d="M830,640 C840,610 860,610 870,640 L880,690" vector-effect="non-scaling-stroke"/>
</g>
<g transform="translate(580.8,560.7) scale(0.31027)" fill="none" stroke="#4a3d42" stroke-width="1.04" stroke-opacity="0.50" stroke-linecap="round" stroke-linejoin="round">
<path d="M0,40 C150,35 300,30 430,25" vector-effect="non-scaling-stroke"/>
<path d="M20,700 C10,550 20,420 60,340 C120,230 250,150 430,120" vector-effect="non-scaling-stroke"/>
<path d="M30,700 C20,560 30,430 70,350 C130,240 260,170 420,140" vector-effect="non-scaling-stroke"/>
<path d="M40,380 C100,260 220,190 300,200" vector-effect="non-scaling-stroke"/>
<path d="M190,0 C120,100 60,170 40,260 C30,320 40,370 50,400 C100,470 180,560 230,700 C260,800 290,900 310,967" vector-effect="non-scaling-stroke"/>
<path d="M150,330 C200,400 260,520 300,650 C320,750 330,850 340,967" vector-effect="non-scaling-stroke"/>
<path d="M220,0 C200,100 180,200 150,330" vector-effect="non-scaling-stroke"/>
<path d="M0,680 C300,680 600,670 940,660" vector-effect="non-scaling-stroke"/>
<path d="M60,730 C300,715 600,700 967,700" vector-effect="non-scaling-stroke"/>
<path d="M810,510 C800,560 810,610 830,640 L830,700" vector-effect="non-scaling-stroke"/>
<path d="M830,640 C840,610 860,610 870,640 L880,690" vector-effect="non-scaling-stroke"/>
</g>
<g transform="translate(579.3,561.1) scale(0.31027)" fill="none" stroke="#4a3d42" stroke-width="0.91" stroke-opacity="0.36" stroke-linecap="round" stroke-linejoin="round">
<path d="M0,40 C150,35 300,30 430,25" vector-effect="non-scaling-stroke"/>
<path d="M20,700 C10,550 20,420 60,340 C120,230 250,150 430,120" vector-effect="non-scaling-stroke"/>
<path d="M30,700 C20,560 30,430 70,350 C130,240 260,170 420,140" vector-effect="non-scaling-stroke"/>
<path d="M40,380 C100,260 220,190 300,200" vector-effect="non-scaling-stroke"/>
<path d="M190,0 C120,100 60,170 40,260 C30,320 40,370 50,400 C100,470 180,560 230,700 C260,800 290,900 310,967" vector-effect="non-scaling-stroke"/>
<path d="M150,330 C200,400 260,520 300,650 C320,750 330,850 340,967" vector-effect="non-scaling-stroke"/>
<path d="M220,0 C200,100 180,200 150,330" vector-effect="non-scaling-stroke"/>
<path d="M0,680 C300,680 600,670 940,660" vector-effect="non-scaling-stroke"/>
<path d="M60,730 C300,715 600,700 967,700" vector-effect="non-scaling-stroke"/>
<path d="M810,510 C800,560 810,610 830,640 L830,700" vector-effect="non-scaling-stroke"/>
<path d="M830,640 C840,610 860,610 870,640 L880,690" vector-effect="non-scaling-stroke"/>
</g>
<g transform="translate(581.6,559.1) scale(0.31027)" fill="none" stroke="#4a3d42" stroke-width="0.91" stroke-opacity="0.27" stroke-linecap="round" stroke-linejoin="round">
<path d="M0,40 C150,35 300,30 430,25" vector-effect="non-scaling-stroke"/>
<path d="M20,700 C10,550 20,420 60,340 C120,230 250,150 430,120" vector-effect="non-scaling-stroke"/>
<path d="M30,700 C20,560 30,430 70,350 C130,240 260,170 420,140" vector-effect="non-scaling-stroke"/>
<path d="M40,380 C100,260 220,190 300,200" vector-effect="non-scaling-stroke"/>
<path d="M190,0 C120,100 60,170 40,260 C30,320 40,370 50,400 C100,470 180,560 230,700 C260,800 290,900 310,967" vector-effect="non-scaling-stroke"/>
<path d="M150,330 C200,400 260,520 300,650 C320,750 330,850 340,967" vector-effect="non-scaling-stroke"/>
<path d="M220,0 C200,100 180,200 150,330" vector-effect="non-scaling-stroke"/>
<path d="M0,680 C300,680 600,670 940,660" vector-effect="non-scaling-stroke"/>
<path d="M60,730 C300,715 600,700 967,700" vector-effect="non-scaling-stroke"/>
<path d="M810,510 C800,560 810,610 830,640 L830,700" vector-effect="non-scaling-stroke"/>
<path d="M830,640 C840,610 860,610 870,640 L880,690" vector-effect="non-scaling-stroke"/>
</g>
<g transform="translate(580,700) scale(0.29824)" fill="none" stroke="#4a3d42" stroke-width="1.30" stroke-opacity="0.90" stroke-linecap="round" stroke-linejoin="round">
<path d="M0,240 C300,235 600,220 980,215" vector-effect="non-scaling-stroke"/>
<path d="M70,295 C400,280 700,265 1006,260" vector-effect="non-scaling-stroke"/>
<path d="M40,230 C200,210 400,190 590,183" vector-effect="non-scaling-stroke"/>
<path d="M80,265 C400,250 700,240 935,240" vector-effect="non-scaling-stroke"/>
<path d="M120,300 C110,400 170,500 280,560 C380,600 520,600 620,560 C720,510 800,450 820,370 C830,320 810,270 790,245" vector-effect="non-scaling-stroke"/>
<path d="M135,310 C130,410 190,510 300,570 C400,590 520,590 610,550" vector-effect="non-scaling-stroke"/>
<path d="M290,300 C280,380 320,450 400,490 C480,520 560,500 620,450 C670,400 690,330 660,255" vector-effect="non-scaling-stroke"/>
<path d="M100,0 C180,100 240,250 270,400 C300,500 320,600 315,715" vector-effect="non-scaling-stroke"/>
<path d="M230,0 C280,100 320,200 330,350 C340,420 380,500 440,575" vector-effect="non-scaling-stroke"/>
<path d="M20,0 C10,100 20,200 35,300" vector-effect="non-scaling-stroke"/>
<path d="M275,625 L280,690 L315,715 L400,690 L430,650 L420,620 L340,630 Z" vector-effect="non-scaling-stroke"/>
<path d="M290,640 L400,690 M330,620 L380,690 M300,700 L360,630" vector-effect="non-scaling-stroke"/>
<path d="M850,60 C840,100 840,150 860,200 L850,290" vector-effect="non-scaling-stroke"/>
<path d="M860,200 C870,160 890,160 910,180 L915,250" vector-effect="non-scaling-stroke"/>
</g>
<g transform="translate(580.8,700.7) scale(0.29824)" fill="none" stroke="#4a3d42" stroke-width="1.04" stroke-opacity="0.50" stroke-linecap="round" stroke-linejoin="round">
<path d="M0,240 C300,235 600,220 980,215" vector-effect="non-scaling-stroke"/>
<path d="M70,295 C400,280 700,265 1006,260" vector-effect="non-scaling-stroke"/>
<path d="M40,230 C200,210 400,190 590,183" vector-effect="non-scaling-stroke"/>
<path d="M80,265 C400,250 700,240 935,240" vector-effect="non-scaling-stroke"/>
<path d="M120,300 C110,400 170,500 280,560 C380,600 520,600 620,560 C720,510 800,450 820,370 C830,320 810,270 790,245" vector-effect="non-scaling-stroke"/>
<path d="M135,310 C130,410 190,510 300,570 C400,590 520,590 610,550" vector-effect="non-scaling-stroke"/>
<path d="M290,300 C280,380 320,450 400,490 C480,520 560,500 620,450 C670,400 690,330 660,255" vector-effect="non-scaling-stroke"/>
<path d="M100,0 C180,100 240,250 270,400 C300,500 320,600 315,715" vector-effect="non-scaling-stroke"/>
<path d="M230,0 C280,100 320,200 330,350 C340,420 380,500 440,575" vector-effect="non-scaling-stroke"/>
<path d="M20,0 C10,100 20,200 35,300" vector-effect="non-scaling-stroke"/>
<path d="M275,625 L280,690 L315,715 L400,690 L430,650 L420,620 L340,630 Z" vector-effect="non-scaling-stroke"/>
<path d="M290,640 L400,690 M330,620 L380,690 M300,700 L360,630" vector-effect="non-scaling-stroke"/>
<path d="M850,60 C840,100 840,150 860,200 L850,290" vector-effect="non-scaling-stroke"/>
<path d="M860,200 C870,160 890,160 910,180 L915,250" vector-effect="non-scaling-stroke"/>
</g>
<g transform="translate(579.3,701.1) scale(0.29824)" fill="none" stroke="#4a3d42" stroke-width="0.91" stroke-opacity="0.36" stroke-linecap="round" stroke-linejoin="round">
<path d="M0,240 C300,235 600,220 980,215" vector-effect="non-scaling-stroke"/>
<path d="M70,295 C400,280 700,265 1006,260" vector-effect="non-scaling-stroke"/>
<path d="M40,230 C200,210 400,190 590,183" vector-effect="non-scaling-stroke"/>
<path d="M80,265 C400,250 700,240 935,240" vector-effect="non-scaling-stroke"/>
<path d="M120,300 C110,400 170,500 280,560 C380,600 520,600 620,560 C720,510 800,450 820,370 C830,320 810,270 790,245" vector-effect="non-scaling-stroke"/>
<path d="M135,310 C130,410 190,510 300,570 C400,590 520,590 610,550" vector-effect="non-scaling-stroke"/>
<path d="M290,300 C280,380 320,450 400,490 C480,520 560,500 620,450 C670,400 690,330 660,255" vector-effect="non-scaling-stroke"/>
<path d="M100,0 C180,100 240,250 270,400 C300,500 320,600 315,715" vector-effect="non-scaling-stroke"/>
<path d="M230,0 C280,100 320,200 330,350 C340,420 380,500 440,575" vector-effect="non-scaling-stroke"/>
<path d="M20,0 C10,100 20,200 35,300" vector-effect="non-scaling-stroke"/>
<path d="M275,625 L280,690 L315,715 L400,690 L430,650 L420,620 L340,630 Z" vector-effect="non-scaling-stroke"/>
<path d="M290,640 L400,690 M330,620 L380,690 M300,700 L360,630" vector-effect="non-scaling-stroke"/>
<path d="M850,60 C840,100 840,150 860,200 L850,290" vector-effect="non-scaling-stroke"/>
<path d="M860,200 C870,160 890,160 910,180 L915,250" vector-effect="non-scaling-stroke"/>
</g>
<g transform="translate(581.6,699.1) scale(0.29824)" fill="none" stroke="#4a3d42" stroke-width="0.91" stroke-opacity="0.27" stroke-linecap="round" stroke-linejoin="round">
<path d="M0,240 C300,235 600,220 980,215" vector-effect="non-scaling-stroke"/>
<path d="M70,295 C400,280 700,265 1006,260" vector-effect="non-scaling-stroke"/>
<path d="M40,230 C200,210 400,190 590,183" vector-effect="non-scaling-stroke"/>
<path d="M80,265 C400,250 700,240 935,240" vector-effect="non-scaling-stroke"/>
<path d="M120,300 C110,400 170,500 280,560 C380,600 520,600 620,560 C720,510 800,450 820,370 C830,320 810,270 790,245" vector-effect="non-scaling-stroke"/>
<path d="M135,310 C130,410 190,510 300,570 C400,590 520,590 610,550" vector-effect="non-scaling-stroke"/>
<path d="M290,300 C280,380 320,450 400,490 C480,520 560,500 620,450 C670,400 690,330 660,255" vector-effect="non-scaling-stroke"/>
<path d="M100,0 C180,100 240,250 270,400 C300,500 320,600 315,715" vector-effect="non-scaling-stroke"/>
<path d="M230,0 C280,100 320,200 330,350 C340,420 380,500 440,575" vector-effect="non-scaling-stroke"/>
<path d="M20,0 C10,100 20,200 35,300" vector-effect="non-scaling-stroke"/>
<path d="M275,625 L280,690 L315,715 L400,690 L430,650 L420,620 L340,630 Z" vector-effect="non-scaling-stroke"/>
<path d="M290,640 L400,690 M330,620 L380,690 M300,700 L360,630" vector-effect="non-scaling-stroke"/>
<path d="M850,60 C840,100 840,150 860,200 L850,290" vector-effect="non-scaling-stroke"/>
<path d="M860,200 C870,160 890,160 910,180 L915,250" vector-effect="non-scaling-stroke"/>
</g>
<g transform="translate(470,450) scale(0.25853)" fill="none" stroke="#4a3d42" stroke-width="1.30" stroke-opacity="0.90" stroke-linecap="round" stroke-linejoin="round">
<path d="M260,10 C180,80 130,170 130,260 C140,330 200,370 300,375 C450,370 600,340 700,290 C760,250 780,200 770,150 C760,130 740,125 720,125" vector-effect="non-scaling-stroke"/>
<path d="M50,225 C200,200 400,160 530,125 C600,120 700,120 790,150" vector-effect="non-scaling-stroke"/>
<path d="M50,225 L45,430" vector-effect="non-scaling-stroke"/>
<path d="M60,400 C300,390 550,380 780,330" vector-effect="non-scaling-stroke"/>
<path d="M60,440 C300,450 600,460 940,460" vector-effect="non-scaling-stroke"/>
<path d="M70,420 C300,415 600,410 800,400" vector-effect="non-scaling-stroke"/>
<path d="M90,470 C80,500 90,540 100,560" vector-effect="non-scaling-stroke"/>
<path d="M380,510 C420,420 500,330 620,250" vector-effect="non-scaling-stroke"/>
<path d="M430,480 C480,400 550,330 610,280" vector-effect="non-scaling-stroke"/>
<path d="M210,967 C250,850 300,720 340,620 C370,550 390,500 430,450" vector-effect="non-scaling-stroke"/>
<path d="M260,967 C300,850 400,700 500,620 C560,560 620,480 680,420" vector-effect="non-scaling-stroke"/>
<path d="M480,860 C490,780 490,700 500,640" vector-effect="non-scaling-stroke"/>
<path d="M600,820 C640,700 690,550 700,400 C710,350 720,300 740,200" vector-effect="non-scaling-stroke"/>
<path d="M640,820 C670,700 700,550 720,400" vector-effect="non-scaling-stroke"/>
<path d="M440,967 C470,870 550,760 680,680 C780,620 860,590 940,575" vector-effect="non-scaling-stroke"/>
<path d="M470,967 C520,850 620,740 760,670 C820,640 880,610 940,600" vector-effect="non-scaling-stroke"/>
<path d="M760,0 C790,40 820,80 860,110" vector-effect="non-scaling-stroke"/>
<path d="M490,0 C520,50 560,100 590,130" vector-effect="non-scaling-stroke"/>
<path d="M784,242 L937,236" vector-effect="non-scaling-stroke"/>
<path d="M790,262 L937,240" vector-effect="non-scaling-stroke"/>
<path d="M760,225 L830,270" vector-effect="non-scaling-stroke"/>
<path d="M784,313 L937,320" vector-effect="non-scaling-stroke"/>
<path d="M784,268 L790,345" vector-effect="non-scaling-stroke"/>
<path d="M787,270 L792,340" vector-effect="non-scaling-stroke"/>
<path d="M745,300 L740,430 M760,305 L755,435 M780,320 L775,440 M795,320 L790,445" vector-effect="non-scaling-stroke"/>
<path d="M598,396 C680,415 740,430 790,441" vector-effect="non-scaling-stroke"/>
<path d="M860,108 L937,102" vector-effect="non-scaling-stroke"/>
<path d="M854,22 L937,15" vector-effect="non-scaling-stroke"/>
</g>
<g transform="translate(470.8,450.7) scale(0.25853)" fill="none" stroke="#4a3d42" stroke-width="1.04" stroke-opacity="0.50" stroke-linecap="round" stroke-linejoin="round">
<path d="M260,10 C180,80 130,170 130,260 C140,330 200,370 300,375 C450,370 600,340 700,290 C760,250 780,200 770,150 C760,130 740,125 720,125" vector-effect="non-scaling-stroke"/>
<path d="M50,225 C200,200 400,160 530,125 C600,120 700,120 790,150" vector-effect="non-scaling-stroke"/>
<path d="M50,225 L45,430" vector-effect="non-scaling-stroke"/>
<path d="M60,400 C300,390 550,380 780,330" vector-effect="non-scaling-stroke"/>
<path d="M60,440 C300,450 600,460 940,460" vector-effect="non-scaling-stroke"/>
<path d="M70,420 C300,415 600,410 800,400" vector-effect="non-scaling-stroke"/>
<path d="M90,470 C80,500 90,540 100,560" vector-effect="non-scaling-stroke"/>
<path d="M380,510 C420,420 500,330 620,250" vector-effect="non-scaling-stroke"/>
<path d="M430,480 C480,400 550,330 610,280" vector-effect="non-scaling-stroke"/>
<path d="M210,967 C250,850 300,720 340,620 C370,550 390,500 430,450" vector-effect="non-scaling-stroke"/>
<path d="M260,967 C300,850 400,700 500,620 C560,560 620,480 680,420" vector-effect="non-scaling-stroke"/>
<path d="M480,860 C490,780 490,700 500,640" vector-effect="non-scaling-stroke"/>
<path d="M600,820 C640,700 690,550 700,400 C710,350 720,300 740,200" vector-effect="non-scaling-stroke"/>
<path d="M640,820 C670,700 700,550 720,400" vector-effect="non-scaling-stroke"/>
<path d="M440,967 C470,870 550,760 680,680 C780,620 860,590 940,575" vector-effect="non-scaling-stroke"/>
<path d="M470,967 C520,850 620,740 760,670 C820,640 880,610 940,600" vector-effect="non-scaling-stroke"/>
<path d="M760,0 C790,40 820,80 860,110" vector-effect="non-scaling-stroke"/>
<path d="M490,0 C520,50 560,100 590,130" vector-effect="non-scaling-stroke"/>
<path d="M784,242 L937,236" vector-effect="non-scaling-stroke"/>
<path d="M790,262 L937,240" vector-effect="non-scaling-stroke"/>
<path d="M760,225 L830,270" vector-effect="non-scaling-stroke"/>
<path d="M784,313 L937,320" vector-effect="non-scaling-stroke"/>
<path d="M784,268 L790,345" vector-effect="non-scaling-stroke"/>
<path d="M787,270 L792,340" vector-effect="non-scaling-stroke"/>
<path d="M745,300 L740,430 M760,305 L755,435 M780,320 L775,440 M795,320 L790,445" vector-effect="non-scaling-stroke"/>
<path d="M598,396 C680,415 740,430 790,441" vector-effect="non-scaling-stroke"/>
<path d="M860,108 L937,102" vector-effect="non-scaling-stroke"/>
<path d="M854,22 L937,15" vector-effect="non-scaling-stroke"/>
</g>
<g transform="translate(469.3,451.1) scale(0.25853)" fill="none" stroke="#4a3d42" stroke-width="0.91" stroke-opacity="0.36" stroke-linecap="round" stroke-linejoin="round">
<path d="M260,10 C180,80 130,170 130,260 C140,330 200,370 300,375 C450,370 600,340 700,290 C760,250 780,200 770,150 C760,130 740,125 720,125" vector-effect="non-scaling-stroke"/>
<path d="M50,225 C200,200 400,160 530,125 C600,120 700,120 790,150" vector-effect="non-scaling-stroke"/>
<path d="M50,225 L45,430" vector-effect="non-scaling-stroke"/>
<path d="M60,400 C300,390 550,380 780,330" vector-effect="non-scaling-stroke"/>
<path d="M60,440 C300,450 600,460 940,460" vector-effect="non-scaling-stroke"/>
<path d="M70,420 C300,415 600,410 800,400" vector-effect="non-scaling-stroke"/>
<path d="M90,470 C80,500 90,540 100,560" vector-effect="non-scaling-stroke"/>
<path d="M380,510 C420,420 500,330 620,250" vector-effect="non-scaling-stroke"/>
<path d="M430,480 C480,400 550,330 610,280" vector-effect="non-scaling-stroke"/>
<path d="M210,967 C250,850 300,720 340,620 C370,550 390,500 430,450" vector-effect="non-scaling-stroke"/>
<path d="M260,967 C300,850 400,700 500,620 C560,560 620,480 680,420" vector-effect="non-scaling-stroke"/>
<path d="M480,860 C490,780 490,700 500,640" vector-effect="non-scaling-stroke"/>
<path d="M600,820 C640,700 690,550 700,400 C710,350 720,300 740,200" vector-effect="non-scaling-stroke"/>
<path d="M640,820 C670,700 700,550 720,400" vector-effect="non-scaling-stroke"/>
<path d="M440,967 C470,870 550,760 680,680 C780,620 860,590 940,575" vector-effect="non-scaling-stroke"/>
<path d="M470,967 C520,850 620,740 760,670 C820,640 880,610 940,600" vector-effect="non-scaling-stroke"/>
<path d="M760,0 C790,40 820,80 860,110" vector-effect="non-scaling-stroke"/>
<path d="M490,0 C520,50 560,100 590,130" vector-effect="non-scaling-stroke"/>
<path d="M784,242 L937,236" vector-effect="non-scaling-stroke"/>
<path d="M790,262 L937,240" vector-effect="non-scaling-stroke"/>
<path d="M760,225 L830,270" vector-effect="non-scaling-stroke"/>
<path d="M784,313 L937,320" vector-effect="non-scaling-stroke"/>
<path d="M784,268 L790,345" vector-effect="non-scaling-stroke"/>
<path d="M787,270 L792,340" vector-effect="non-scaling-stroke"/>
<path d="M745,300 L740,430 M760,305 L755,435 M780,320 L775,440 M795,320 L790,445" vector-effect="non-scaling-stroke"/>
<path d="M598,396 C680,415 740,430 790,441" vector-effect="non-scaling-stroke"/>
<path d="M860,108 L937,102" vector-effect="non-scaling-stroke"/>
<path d="M854,22 L937,15" vector-effect="non-scaling-stroke"/>
</g>
<g transform="translate(471.6,449.1) scale(0.25853)" fill="none" stroke="#4a3d42" stroke-width="0.91" stroke-opacity="0.27" stroke-linecap="round" stroke-linejoin="round">
<path d="M260,10 C180,80 130,170 130,260 C140,330 200,370 300,375 C450,370 600,340 700,290 C760,250 780,200 770,150 C760,130 740,125 720,125" vector-effect="non-scaling-stroke"/>
<path d="M50,225 C200,200 400,160 530,125 C600,120 700,120 790,150" vector-effect="non-scaling-stroke"/>
<path d="M50,225 L45,430" vector-effect="non-scaling-stroke"/>
<path d="M60,400 C300,390 550,380 780,330" vector-effect="non-scaling-stroke"/>
<path d="M60,440 C300,450 600,460 940,460" vector-effect="non-scaling-stroke"/>
<path d="M70,420 C300,415 600,410 800,400" vector-effect="non-scaling-stroke"/>
<path d="M90,470 C80,500 90,540 100,560" vector-effect="non-scaling-stroke"/>
<path d="M380,510 C420,420 500,330 620,250" vector-effect="non-scaling-stroke"/>
<path d="M430,480 C480,400 550,330 610,280" vector-effect="non-scaling-stroke"/>
<path d="M210,967 C250,850 300,720 340,620 C370,550 390,500 430,450" vector-effect="non-scaling-stroke"/>
<path d="M260,967 C300,850 400,700 500,620 C560,560 620,480 680,420" vector-effect="non-scaling-stroke"/>
<path d="M480,860 C490,780 490,700 500,640" vector-effect="non-scaling-stroke"/>
<path d="M600,820 C640,700 690,550 700,400 C710,350 720,300 740,200" vector-effect="non-scaling-stroke"/>
<path d="M640,820 C670,700 700,550 720,400" vector-effect="non-scaling-stroke"/>
<path d="M440,967 C470,870 550,760 680,680 C780,620 860,590 940,575" vector-effect="non-scaling-stroke"/>
<path d="M470,967 C520,850 620,740 760,670 C820,640 880,610 940,600" vector-effect="non-scaling-stroke"/>
<path d="M760,0 C790,40 820,80 860,110" vector-effect="non-scaling-stroke"/>
<path d="M490,0 C520,50 560,100 590,130" vector-effect="non-scaling-stroke"/>
<path d="M784,242 L937,236" vector-effect="non-scaling-stroke"/>
<path d="M790,262 L937,240" vector-effect="non-scaling-stroke"/>
<path d="M760,225 L830,270" vector-effect="non-scaling-stroke"/>
<path d="M784,313 L937,320" vector-effect="non-scaling-stroke"/>
<path d="M784,268 L790,345" vector-effect="non-scaling-stroke"/>
<path d="M787,270 L792,340" vector-effect="non-scaling-stroke"/>
<path d="M745,300 L740,430 M760,305 L755,435 M780,320 L775,440 M795,320 L790,445" vector-effect="non-scaling-stroke"/>
<path d="M598,396 C680,415 740,430 790,441" vector-effect="non-scaling-stroke"/>
<path d="M860,108 L937,102" vector-effect="non-scaling-stroke"/>
<path d="M854,22 L937,15" vector-effect="non-scaling-stroke"/>
</g>
<g transform="translate(470,450) scale(0.25853)" fill="none" stroke="#8a8084" stroke-width="1.00" stroke-opacity="0.80" stroke-linecap="round" stroke-linejoin="round">
<path d="M40,560 C100,650 160,750 210,967" vector-effect="non-scaling-stroke"/>
<path d="M60,600 C120,680 170,780 200,900" vector-effect="non-scaling-stroke"/>
</g>
<g transform="translate(470.8,450.7) scale(0.25853)" fill="none" stroke="#8a8084" stroke-width="0.80" stroke-opacity="0.44" stroke-linecap="round" stroke-linejoin="round">
<path d="M40,560 C100,650 160,750 210,967" vector-effect="non-scaling-stroke"/>
<path d="M60,600 C120,680 170,780 200,900" vector-effect="non-scaling-stroke"/>
</g>
<g transform="translate(469.3,451.1) scale(0.25853)" fill="none" stroke="#8a8084" stroke-width="0.70" stroke-opacity="0.32" stroke-linecap="round" stroke-linejoin="round">
<path d="M40,560 C100,650 160,750 210,967" vector-effect="non-scaling-stroke"/>
<path d="M60,600 C120,680 170,780 200,900" vector-effect="non-scaling-stroke"/>
</g>
<g transform="translate(471.6,449.1) scale(0.25853)" fill="none" stroke="#8a8084" stroke-width="0.70" stroke-opacity="0.24" stroke-linecap="round" stroke-linejoin="round">
<path d="M40,560 C100,650 160,750 210,967" vector-effect="non-scaling-stroke"/>
<path d="M60,600 C120,680 170,780 200,900" vector-effect="non-scaling-stroke"/>
</g></svg>
<div class="abs" style="left:709px;top:170px;width:4px;height:548px;background:linear-gradient(to right, rgba(0,0,0,0), rgba(0,0,0,0.12));"></div>
<div class="abs" style="left:713px;top:172px;width:293px;height:546px;background:#2c2c2c;"></div>
<div class="abs" style="left:714px;top:175px;width:292px;height:17px;background:#393939;"></div>
<div class="abs" style="left:714px;top:175px;width:44px;height:18px;background:#535353;"></div>
<div class="abs" style="left:758px;top:175px;width:1px;height:17px;background:#2a2a2a;"></div>
<div class="abs" style="left:759px;top:176px;width:44px;height:16px;background:#3e3e3e;"></div>
<div class="abs" style="left:803px;top:175px;width:1px;height:17px;background:#2a2a2a;"></div>
<div class="abs" style="left:804px;top:176px;width:57px;height:16px;background:#3e3e3e;"></div>
<div class="abs" style="left:861px;top:175px;width:1px;height:17px;background:#2a2a2a;"></div>
<div class="abs" style="left:714px;top:192px;width:292px;height:1px;background:#2a2a2a;"></div>
<div class="abs" style="left:714px;top:193px;width:292px;height:98px;background:#535353;"></div>
<div class="abs" style="left:714px;top:175px;width:44px;height:19px;background:#535353;"></div>
<div class="abs" style="left:721px;top:178px;font-size:11px;line-height:13px;color:#ececec;white-space:nowrap;font-weight:bold;letter-spacing:-0.2px">Livelli</div>
<div class="abs" style="left:765px;top:178px;font-size:11px;line-height:13px;color:#b4b4b4;white-space:nowrap;font-weight:bold;letter-spacing:-0.2px">Canali</div>
<div class="abs" style="left:811px;top:178px;font-size:11px;line-height:13px;color:#b4b4b4;white-space:nowrap;font-weight:bold;letter-spacing:-0.1px">Tracciati</div>
<svg class="abs" style="left:960px;top:176px" width="46" height="16"><path d="M6 4 L11 8 L6 12 Z M11 4 L16 8 L11 12 Z" fill="#b5b5b5"/><rect x="22" y="3" width="1" height="11" fill="#8a8a8a"/><rect x="24" y="3" width="1" height="11" fill="#8a8a8a"/><path d="M29 7 L34 7 L31.5 10 Z" fill="#cfcfcf"/><rect x="35" y="4" width="8" height="1.3" fill="#e0e0e0"/><rect x="35" y="6.5" width="8" height="1.3" fill="#e0e0e0"/><rect x="35" y="9" width="8" height="1.3" fill="#e0e0e0"/><rect x="35" y="11.5" width="8" height="1.3" fill="#e0e0e0"/></svg>
<div class="abs" style="left:714px;top:220px;width:292px;height:1px;background:#3d3d3d;"></div>
<div class="abs" style="left:714px;top:221px;width:292px;height:1px;background:#5c5c5c;"></div>
<div class="abs" style="left:714px;top:249px;width:292px;height:1px;background:#3d3d3d;"></div>
<div class="abs" style="left:714px;top:250px;width:292px;height:1px;background:#5c5c5c;"></div>
<div class="abs" style="left:714px;top:278px;width:292px;height:1px;background:#3d3d3d;"></div>
<div class="abs" style="left:719px;top:199px;width:112px;height:17px;background:linear-gradient(#5f5f5f,#4f4f4f);border:1px solid #323232;border-radius:2px;box-sizing:border-box;box-shadow:inset 0 1px 0 #6a6a6a"></div>
<svg class="abs" style="left:724px;top:201px" width="14" height="14"><circle cx="8" cy="6" r="3.6" fill="none" stroke="#dcdcdc" stroke-width="1.4"/><path d="M5.5 8.5 L2 12" stroke="#dcdcdc" stroke-width="2"/></svg>
<div class="abs" style="left:739px;top:200px;font-size:11px;line-height:13px;color:#ececec;white-space:nowrap;">Tipo</div>
<svg class="abs" style="left:820px;top:202px" width="7" height="10"><path d="M0.5 4 L3.5 0.5 L6.5 4 Z M0.5 6 L3.5 9.5 L6.5 6 Z" fill="#dedede"/></svg>
<div class="abs" style="left:719px;top:227px;width:182px;height:17px;background:linear-gradient(#5f5f5f,#4f4f4f);border:1px solid #323232;border-radius:2px;box-sizing:border-box;box-shadow:inset 0 1px 0 #6a6a6a"></div>
<div class="abs" style="left:725px;top:228px;font-size:11px;line-height:13px;color:#ececec;white-space:nowrap;">Normale</div>
<svg class="abs" style="left:891px;top:230px" width="7" height="10"><path d="M0.5 4 L3.5 0.5 L6.5 4 Z M0.5 6 L3.5 9.5 L6.5 6 Z" fill="#dedede"/></svg>
<svg class="abs" style="left:850px;top:197px" width="120" height="20"><rect x="7.5" y="3.5" width="12" height="11" fill="none" stroke="#d0d0d0" stroke-width="1.2"/><path d="M9 13 L12 9 L14 11 L16 8.5 L18 13 Z" fill="#d0d0d0"/><circle cx="16.5" cy="6.5" r="1.2" fill="#d0d0d0"/><circle cx="36.5" cy="9.5" r="5.5" fill="#5a5a5a" stroke="#d0d0d0" stroke-width="1.2"/><path d="M32.6 13.4 A5.5 5.5 0 0 1 40.4 5.6 Z" fill="#d0d0d0"/><text x="55.5" y="15.5" font-family="Liberation Serif, serif" font-weight="bold" font-size="15" fill="#d8d8d8">T</text><rect x="82" y="5" width="8.5" height="8.5" fill="none" stroke="#d0d0d0" stroke-width="1"/><circle cx="82" cy="5" r="1.3" fill="#535353" stroke="#d0d0d0" stroke-width="0.9"/><circle cx="90.5" cy="5" r="1.3" fill="#535353" stroke="#d0d0d0" stroke-width="0.9"/><circle cx="82" cy="13.5" r="1.3" fill="#535353" stroke="#d0d0d0" stroke-width="0.9"/><circle cx="90.5" cy="13.5" r="1.3" fill="#535353" stroke="#d0d0d0" stroke-width="0.9"/><path d="M108.5 3.5 L112.5 3.5 L115.5 6.5 L115.5 14.5 L108.5 14.5 Z" fill="#535353" stroke="#d0d0d0" stroke-width="1"/><rect x="103.5" y="9" width="6" height="7" fill="#c4c4c4"/></svg>
<div class="abs" style="left:995px;top:199px;width:9px;height:17px;background:#3a3a3a;border:1px solid #2e2e2e;box-sizing:border-box"></div>
<div class="abs" style="left:996px;top:200px;width:7px;height:7px;background:linear-gradient(#9a9a9a,#6e6e6e);"></div>
<div class="abs" style="left:906px;top:229px;font-size:11px;line-height:13px;color:#ececec;white-space:nowrap;letter-spacing:-0.25px">Opacità:</div>
<div class="abs" style="left:948px;top:225px;width:56px;height:20px;background:#3f5f96;border-radius:3px"></div>
<div class="abs" style="left:949px;top:226px;width:54px;height:18px;background:#4a4a4a;border-radius:2px"></div>
<div class="abs" style="left:950px;top:227px;width:34px;height:16px;background:#ffffff;"></div>
<div class="abs" style="left:953px;top:229px;width:28px;height:12px;background:#d8d8d8;"></div>
<div class="abs" style="left:953px;top:228px;font-size:11px;line-height:13px;color:#5a5a5a;white-space:nowrap;">100%</div>
<div class="abs" style="left:985px;top:227px;width:17px;height:16px;background:linear-gradient(#6a6a6a,#575757);"></div>
<svg class="abs" style="left:989px;top:232px" width="9" height="6"><path d="M1 1 L8 1 L4.5 5 Z" fill="#e6e6e6"/></svg>
<div class="abs" style="left:719px;top:257px;font-size:11px;line-height:13px;color:#ececec;white-space:nowrap;">Bloc.:</div>
<svg class="abs" style="left:750px;top:253px" width="90" height="18"><rect x="3" y="5" width="11" height="11" fill="#d6d6d6"/><rect x="3.8" y="5.8" width="3" height="3" fill="#7a7a7a"/><rect x="10.2" y="5.8" width="3" height="3" fill="#7a7a7a"/><rect x="7" y="9" width="3" height="3" fill="#7a7a7a"/><rect x="3.8" y="12.2" width="3" height="3" fill="#7a7a7a"/><rect x="10.2" y="12.2" width="3" height="3" fill="#7a7a7a"/><path d="M37.8 2.6 L39.9 4.6 L32.8 11.6 L30.6 9.6 Z" fill="#d0d0d0"/><path d="M30.2 10.2 C27.5 10.4 26.2 12 25.2 13.8 C24.6 15 23.6 15.7 22.6 16 C26.5 17 30.4 16 32.4 12.4 Z" fill="#d0d0d0"/><path d="M52.5 4.5 V14.1 M47.7 9.3 H57.3" stroke="#d0d0d0" stroke-width="1.3"/><path d="M52.5 2.3 L55.5 5.5 L49.5 5.5 Z M52.5 16.3 L55.5 13.1 L49.5 13.1 Z M45.5 9.3 L48.7 6.3 L48.7 12.3 Z M59.5 9.3 L56.3 6.3 L56.3 12.3 Z" fill="#d0d0d0"/><path d="M72.6 9 L72.6 6.8 A2.6 2.6 0 0 1 77.8 6.8 L77.8 9" fill="none" stroke="#d0d0d0" stroke-width="1.5"/><rect x="70.2" y="8.6" width="10" height="7.4" rx="1" fill="#d0d0d0"/><rect x="74.5" y="10.8" width="1.4" height="2.6" fill="#333"/></svg>
<div class="abs" style="left:910px;top:257px;font-size:11px;line-height:13px;color:#ececec;white-space:nowrap;letter-spacing:-0.25px">Riemp.:</div>
<div class="abs" style="left:949px;top:254px;width:54px;height:18px;background:#3a3a3a;border:1px solid #474747;box-sizing:border-box;border-radius:2px"></div>
<div class="abs" style="left:953px;top:257px;font-size:11px;line-height:13px;color:#e6e6e6;white-space:nowrap;">100%</div>
<div class="abs" style="left:985px;top:255px;width:17px;height:16px;background:linear-gradient(#6a6a6a,#575757);"></div>
<svg class="abs" style="left:989px;top:260px" width="9" height="6"><path d="M1 1 L8 1 L4.5 5 Z" fill="#e6e6e6"/></svg>
<div class="abs" style="left:714px;top:279px;width:278px;height:411px;background:#474747;"></div>
<div class="abs" style="left:992px;top:279px;width:14px;height:411px;background:#3b3b3b;"></div>
<div class="abs" style="left:714px;top:279px;width:278px;height:38px;background:#535353;"></div>
<div class="abs" style="left:714px;top:317px;width:278px;height:1px;background:#404040;"></div>
<div class="abs" style="left:744px;top:279px;width:1px;height:38px;background:#404040;"></div>
<svg class="abs" style="left:722px;top:292px" width="15" height="11"><path d="M0.6 5.5 C2.5 1.2 4.5 0.6 7 0.6 C9.5 0.6 11.5 1.2 13.4 5.5 C11.5 9.8 9.5 10.4 7 10.4 C4.5 10.4 2.5 9.8 0.6 5.5 Z" fill="#cfcfcf" stroke="#333" stroke-width="0.5"/><circle cx="7" cy="5.5" r="2.7" fill="#2e2e2e"/><circle cx="8" cy="4.4" r="0.9" fill="#f4f4f4"/></svg>
<div class="abs" style="left:748px;top:282px;width:28px;height:32px;background:#fff;border:1px solid #111;box-sizing:border-box;background-image:linear-gradient(45deg,#cdcdcd 25%,transparent 25%,transparent 75%,#cdcdcd 75%),linear-gradient(45deg,#cdcdcd 25%,transparent 25%,transparent 75%,#cdcdcd 75%);background-size:8px 8px;background-position:1px 1px,5px 5px"></div>
<div class="abs" style="left:784px;top:293px;font-size:11px;line-height:13px;color:#f2f2f2;white-space:nowrap;">ribbon</div>
<svg class="abs" style="left:964px;top:291px" width="12" height="14"><path d="M3 6.5 L3 4.5 A3 3 0 0 1 9 4.5 L9 6.5" fill="none" stroke="#d0d0d0" stroke-width="1.6"/><rect x="1" y="6.5" width="10" height="7" rx="1" fill="#d0d0d0"/><rect x="5.3" y="8.5" width="1.4" height="3" fill="#444"/></svg>
<div class="abs" style="left:714px;top:318px;width:278px;height:38px;background:#535353;"></div>
<div class="abs" style="left:714px;top:356px;width:278px;height:1px;background:#404040;"></div>
<div class="abs" style="left:744px;top:318px;width:1px;height:38px;background:#404040;"></div>
<svg class="abs" style="left:722px;top:331px" width="15" height="11"><path d="M0.6 5.5 C2.5 1.2 4.5 0.6 7 0.6 C9.5 0.6 11.5 1.2 13.4 5.5 C11.5 9.8 9.5 10.4 7 10.4 C4.5 10.4 2.5 9.8 0.6 5.5 Z" fill="#cfcfcf" stroke="#333" stroke-width="0.5"/><circle cx="7" cy="5.5" r="2.7" fill="#2e2e2e"/><circle cx="8" cy="4.4" r="0.9" fill="#f4f4f4"/></svg>
<div class="abs" style="left:748px;top:321px;width:28px;height:32px;background:#fff;border:1px solid #111;box-sizing:border-box;background-image:linear-gradient(45deg,#cdcdcd 25%,transparent 25%,transparent 75%,#cdcdcd 75%),linear-gradient(45deg,#cdcdcd 25%,transparent 25%,transparent 75%,#cdcdcd 75%);background-size:8px 8px;background-position:1px 1px,5px 5px"></div>
<div class="abs" style="left:784px;top:332px;font-size:11px;line-height:13px;color:#f2f2f2;white-space:nowrap;">hair</div>
<svg class="abs" style="left:964px;top:330px" width="12" height="14"><path d="M3 6.5 L3 4.5 A3 3 0 0 1 9 4.5 L9 6.5" fill="none" stroke="#d0d0d0" stroke-width="1.6"/><rect x="1" y="6.5" width="10" height="7" rx="1" fill="#d0d0d0"/><rect x="5.3" y="8.5" width="1.4" height="3" fill="#444"/></svg>
<div class="abs" style="left:714px;top:357px;width:278px;height:38px;background:#6b7b93;"></div>
<div class="abs" style="left:714px;top:395px;width:278px;height:1px;background:#404040;"></div>
<div class="abs" style="left:744px;top:357px;width:1px;height:38px;background:#535353;"></div>
<div class="abs" style="left:714px;top:357px;width:30px;height:38px;background:#535353;"></div>
<div class="abs" style="left:744px;top:357px;width:1px;height:38px;background:#404040;"></div>
<svg class="abs" style="left:722px;top:370px" width="15" height="11"><path d="M0.6 5.5 C2.5 1.2 4.5 0.6 7 0.6 C9.5 0.6 11.5 1.2 13.4 5.5 C11.5 9.8 9.5 10.4 7 10.4 C4.5 10.4 2.5 9.8 0.6 5.5 Z" fill="#cfcfcf" stroke="#333" stroke-width="0.5"/><circle cx="7" cy="5.5" r="2.7" fill="#2e2e2e"/><circle cx="8" cy="4.4" r="0.9" fill="#f4f4f4"/></svg>
<div class="abs" style="left:748px;top:360px;width:28px;height:32px;background:#fff;border:1px solid #111;box-sizing:border-box;background-image:linear-gradient(45deg,#cdcdcd 25%,transparent 25%,transparent 75%,#cdcdcd 75%),linear-gradient(45deg,#cdcdcd 25%,transparent 25%,transparent 75%,#cdcdcd 75%);background-size:8px 8px;background-position:1px 1px,5px 5px"></div>
<svg class="abs" style="left:746px;top:358px" width="32" height="36"><path d="M0.5 12 V0.5 H10 M22 0.5 H31.5 V12 M31.5 24 V35.5 H22 M10 35.5 H0.5 V24" fill="none" stroke="#ffffff" stroke-width="1"/></svg>
<div class="abs" style="left:784px;top:371px;font-size:11px;line-height:13px;color:#f2f2f2;white-space:nowrap;">face</div>
<div class="abs" style="left:714px;top:396px;width:278px;height:38px;background:#535353;"></div>
<div class="abs" style="left:714px;top:434px;width:278px;height:1px;background:#404040;"></div>
<div class="abs" style="left:744px;top:396px;width:1px;height:38px;background:#404040;"></div>
<svg class="abs" style="left:722px;top:409px" width="15" height="11"><path d="M0.6 5.5 C2.5 1.2 4.5 0.6 7 0.6 C9.5 0.6 11.5 1.2 13.4 5.5 C11.5 9.8 9.5 10.4 7 10.4 C4.5 10.4 2.5 9.8 0.6 5.5 Z" fill="#cfcfcf" stroke="#333" stroke-width="0.5"/><circle cx="7" cy="5.5" r="2.7" fill="#2e2e2e"/><circle cx="8" cy="4.4" r="0.9" fill="#f4f4f4"/></svg>
<div class="abs" style="left:748px;top:399px;width:28px;height:32px;background:#fff;border:1px solid #111;box-sizing:border-box;background-image:linear-gradient(45deg,#cdcdcd 25%,transparent 25%,transparent 75%,#cdcdcd 75%),linear-gradient(45deg,#cdcdcd 25%,transparent 25%,transparent 75%,#cdcdcd 75%);background-size:8px 8px;background-position:1px 1px,5px 5px"></div>
<div class="abs" style="left:784px;top:410px;font-size:11px;line-height:13px;color:#f2f2f2;white-space:nowrap;">body</div>
<div class="abs" style="left:714px;top:435px;width:278px;height:38px;background:#535353;"></div>
<div class="abs" style="left:714px;top:473px;width:278px;height:1px;background:#404040;"></div>
<div class="abs" style="left:744px;top:435px;width:1px;height:38px;background:#404040;"></div>
<div class="abs" style="left:723px;top:449px;width:13px;height:12px;background:#474747;border:1px solid #2e2e2e;box-sizing:border-box"></div>
<div class="abs" style="left:748px;top:438px;width:28px;height:32px;background:#fff;border:1px solid #111;box-sizing:border-box;background-image:linear-gradient(45deg,#cdcdcd 25%,transparent 25%,transparent 75%,#cdcdcd 75%),linear-gradient(45deg,#cdcdcd 25%,transparent 25%,transparent 75%,#cdcdcd 75%);background-size:8px 8px;background-position:1px 1px,5px 5px"></div>
<div class="abs" style="left:784px;top:449px;font-size:11px;line-height:13px;color:#f2f2f2;white-space:nowrap;">mannequin</div>
<svg class="abs" style="left:964px;top:447px" width="12" height="14"><path d="M3 6.5 L3 4.5 A3 3 0 0 1 9 4.5 L9 6.5" fill="none" stroke="#d0d0d0" stroke-width="1.6"/><rect x="1" y="6.5" width="10" height="7" rx="1" fill="#d0d0d0"/><rect x="5.3" y="8.5" width="1.4" height="3" fill="#444"/></svg>
<div class="abs" style="left:714px;top:474px;width:278px;height:38px;background:#535353;"></div>
<div class="abs" style="left:714px;top:512px;width:278px;height:1px;background:#404040;"></div>
<div class="abs" style="left:744px;top:474px;width:1px;height:38px;background:#404040;"></div>
<svg class="abs" style="left:722px;top:487px" width="15" height="11"><path d="M0.6 5.5 C2.5 1.2 4.5 0.6 7 0.6 C9.5 0.6 11.5 1.2 13.4 5.5 C11.5 9.8 9.5 10.4 7 10.4 C4.5 10.4 2.5 9.8 0.6 5.5 Z" fill="#cfcfcf" stroke="#333" stroke-width="0.5"/><circle cx="7" cy="5.5" r="2.7" fill="#2e2e2e"/><circle cx="8" cy="4.4" r="0.9" fill="#f4f4f4"/></svg>
<div class="abs" style="left:748px;top:477px;width:28px;height:32px;background:#fff;border:1px solid #111;box-sizing:border-box;background-image:linear-gradient(45deg,#cdcdcd 25%,transparent 25%,transparent 75%,#cdcdcd 75%),linear-gradient(45deg,#cdcdcd 25%,transparent 25%,transparent 75%,#cdcdcd 75%);background-size:8px 8px;background-position:1px 1px,5px 5px"></div>
<svg class="abs" style="left:748px;top:477px" width="28" height="32"><rect x="1" y="11" width="26" height="20" fill="#fff"/><rect x="4" y="14" width="1" height="1" fill="#333"/><rect x="7" y="16" width="1" height="1" fill="#333"/><rect x="10" y="13" width="1" height="1" fill="#333"/><rect x="13" y="15" width="1" height="1" fill="#333"/><rect x="16" y="18" width="1" height="1" fill="#333"/><rect x="19" y="14" width="1" height="1" fill="#333"/><rect x="22" y="17" width="1" height="1" fill="#333"/><rect x="6" y="20" width="1" height="1" fill="#333"/><rect x="9" y="22" width="1" height="1" fill="#333"/><rect x="12" y="19" width="1" height="1" fill="#333"/><rect x="15" y="23" width="1" height="1" fill="#333"/><rect x="18" y="21" width="1" height="1" fill="#333"/><rect x="21" y="24" width="1" height="1" fill="#333"/><rect x="5" y="26" width="1" height="1" fill="#333"/><rect x="11" y="25" width="1" height="1" fill="#333"/><rect x="17" y="27" width="1" height="1" fill="#333"/><rect x="23" y="22" width="1" height="1" fill="#333"/><rect x="8" y="28" width="1" height="1" fill="#333"/><rect x="14" y="27" width="1" height="1" fill="#333"/><rect x="20" y="28" width="1" height="1" fill="#333"/></svg>
<div class="abs" style="left:784px;top:488px;font-size:11px;line-height:13px;color:#f2f2f2;white-space:nowrap;">vespa</div>
<div class="abs" style="left:714px;top:513px;width:278px;height:38px;background:#535353;"></div>
<div class="abs" style="left:714px;top:551px;width:278px;height:1px;background:#404040;"></div>
<div class="abs" style="left:744px;top:513px;width:1px;height:38px;background:#404040;"></div>
<svg class="abs" style="left:722px;top:526px" width="15" height="11"><path d="M0.6 5.5 C2.5 1.2 4.5 0.6 7 0.6 C9.5 0.6 11.5 1.2 13.4 5.5 C11.5 9.8 9.5 10.4 7 10.4 C4.5 10.4 2.5 9.8 0.6 5.5 Z" fill="#cfcfcf" stroke="#333" stroke-width="0.5"/><circle cx="7" cy="5.5" r="2.7" fill="#2e2e2e"/><circle cx="8" cy="4.4" r="0.9" fill="#f4f4f4"/></svg>
<div class="abs" style="left:748px;top:516px;width:28px;height:32px;background:#ffffff;border:1px solid #111;box-sizing:border-box"></div>
<div class="abs" style="left:784px;top:527px;font-size:11px;line-height:13px;color:#f2f2f2;white-space:nowrap;">bg</div>
<svg class="abs" style="left:964px;top:525px" width="12" height="14"><path d="M3 6.5 L3 4.5 A3 3 0 0 1 9 4.5 L9 6.5" fill="none" stroke="#d0d0d0" stroke-width="1.6"/><rect x="1" y="6.5" width="10" height="7" rx="1" fill="#d0d0d0"/><rect x="5.3" y="8.5" width="1.4" height="3" fill="#444"/></svg>
<div class="abs" style="left:714px;top:690px;width:292px;height:1px;background:#2e2e2e;"></div>
<div class="abs" style="left:714px;top:691px;width:292px;height:18px;background:#535353;"></div>
<div class="abs" style="left:714px;top:691px;width:292px;height:1px;background:#676767;"></div>
<div class="abs" style="left:714px;top:709px;width:292px;height:1px;background:#2e2e2e;"></div>
<div class="abs" style="left:714px;top:710px;width:292px;height:7px;background:#535353;"></div>
<div class="abs" style="left:714px;top:710px;width:292px;height:1px;background:#646464;"></div>
<div class="abs" style="left:710px;top:717px;width:296px;height:5px;background:linear-gradient(rgba(0,0,0,0.06),rgba(0,0,0,0));"></div>
<svg class="abs" style="left:851px;top:711px" width="20" height="4"><rect x="0" y="0" width="1" height="4" fill="#2a2a2a"/><rect x="2" y="0" width="1" height="4" fill="#2a2a2a"/><rect x="4" y="0" width="1" height="4" fill="#2a2a2a"/><rect x="6" y="0" width="1" height="4" fill="#2a2a2a"/><rect x="8" y="0" width="1" height="4" fill="#2a2a2a"/><rect x="10" y="0" width="1" height="4" fill="#2a2a2a"/><rect x="12" y="0" width="1" height="4" fill="#2a2a2a"/><rect x="14" y="0" width="1" height="4" fill="#2a2a2a"/><rect x="16" y="0" width="1" height="4" fill="#2a2a2a"/><rect x="18" y="0" width="1" height="4" fill="#2a2a2a"/></svg>
<svg class="abs" style="left:800px;top:692px" width="206" height="17"><rect x="5" y="5.5" width="7" height="5" rx="2.5" fill="none" stroke="#9a9a9a" stroke-width="1.6"/><rect x="11" y="5.5" width="7" height="5" rx="2.5" fill="none" stroke="#9a9a9a" stroke-width="1.6"/><rect x="9" y="7.2" width="6" height="1.6" fill="#9a9a9a"/><text x="32" y="13" font-family="Liberation Serif, serif" font-style="italic" font-size="14" fill="#c8c8c8">fx</text><path d="M45 13 L48 13 L46.5 15 Z" fill="#c8c8c8"/><rect x="59" y="3" width="14" height="11" fill="#cfcfcf"/><circle cx="66" cy="8.5" r="2.6" fill="#535353"/><circle cx="92.5" cy="8.5" r="5" fill="none" stroke="#cfcfcf" stroke-width="1.3"/><path d="M89 12 A5 5 0 0 1 96 5 Z" fill="#cfcfcf"/><path d="M99 13 L102 13 L100.5 15 Z" fill="#c8c8c8"/><path d="M113 4 L118 4 L119 5.5 L126 5.5 L126 14 L113 14 Z" fill="#cfcfcf"/><path d="M140 3 L151 3 L151 14 L145 14 L145 9 L140 9 Z" fill="#cfcfcf"/><path d="M141 10 L144 13" stroke="#cfcfcf" stroke-width="1"/><rect x="166" y="4" width="12" height="1.5" fill="#cfcfcf"/><rect x="170" y="2.5" width="4" height="1.5" fill="#cfcfcf"/><path d="M167 6 L177 6 L176 15 L168 15 Z" fill="#cfcfcf"/><rect x="169.5" y="7" width="1" height="7" fill="#535353"/><rect x="171.5" y="7" width="1" height="7" fill="#535353"/><rect x="173.5" y="7" width="1" height="7" fill="#535353"/></svg>
<svg class="abs" style="left:994px;top:700px" width="12" height="10"><rect x="2" y="8" width="1" height="1" fill="#2a2a2a"/><rect x="4" y="6" width="1" height="1" fill="#2a2a2a"/><rect x="4" y="8" width="1" height="1" fill="#2a2a2a"/><rect x="6" y="4" width="1" height="1" fill="#2a2a2a"/><rect x="6" y="6" width="1" height="1" fill="#2a2a2a"/><rect x="6" y="8" width="1" height="1" fill="#2a2a2a"/><rect x="8" y="2" width="1" height="1" fill="#2a2a2a"/><rect x="8" y="4" width="1" height="1" fill="#2a2a2a"/><rect x="8" y="6" width="1" height="1" fill="#2a2a2a"/><rect x="8" y="8" width="1" height="1" fill="#2a2a2a"/><rect x="10" y="0" width="1" height="1" fill="#2a2a2a"/><rect x="10" y="2" width="1" height="1" fill="#2a2a2a"/><rect x="10" y="4" width="1" height="1" fill="#2a2a2a"/><rect x="10" y="6" width="1" height="1" fill="#2a2a2a"/><rect x="10" y="8" width="1" height="1" fill="#2a2a2a"/></svg>
</body></html>
